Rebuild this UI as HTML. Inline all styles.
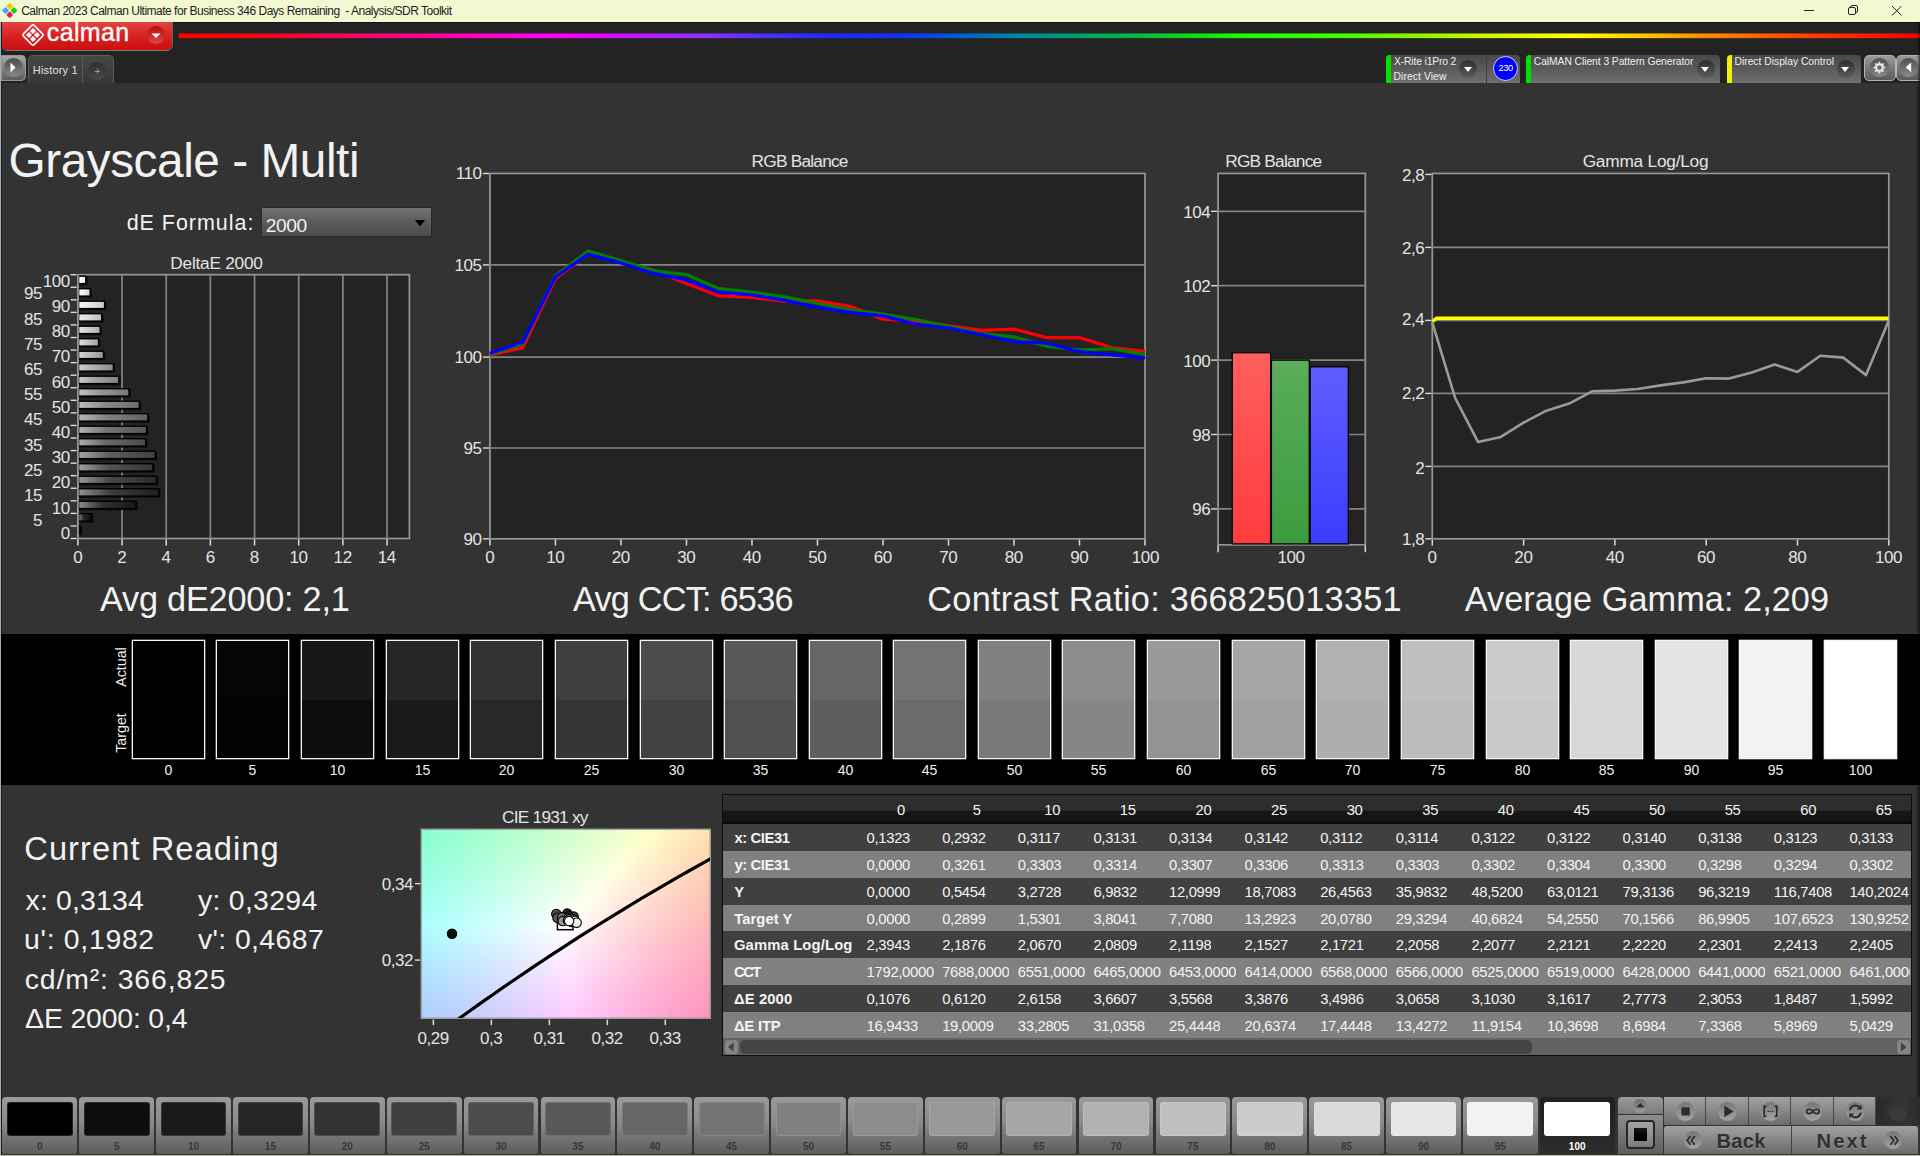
<!DOCTYPE html>
<html lang="en"><head><meta charset="utf-8"><title>Calman 2023 - Analysis/SDR Toolkit</title>
<style>
html,body{margin:0;padding:0;overflow:hidden}
html{width:1920px;height:1156px}
body{width:1920px;height:1156px;overflow:hidden;background:#333;font-family:"Liberation Sans", sans-serif;position:relative}
.t{position:absolute;white-space:nowrap;line-height:1;}
.a{position:absolute}
svg{position:absolute;left:0;top:0;overflow:visible}
svg text{font-family:"Liberation Sans", sans-serif}
.dd{position:absolute;width:18px;height:18px;border-radius:50%;background:linear-gradient(#2e2e2e,#5c5c5c);}
.dd:after{content:"";position:absolute;left:4.500px;top:7.400px;border-left:4.500px solid transparent;border-right:4.500px solid transparent;border-top:5.200px solid #fff}
.mb{position:absolute;top:55px;height:28px;border-radius:4px 4px 0 0;background:linear-gradient(#484848,#6e6e6e);overflow:hidden}
.mb i{position:absolute;left:0;top:0;bottom:0;width:5px}
.sw{position:absolute;top:640px;width:71px;height:117px;border:1px solid #f4f4f4;box-shadow:0 0 0 .4px #bbb}
.sw b{position:absolute;left:0;right:0;top:0;height:59px}
.bb{position:absolute;top:1097px;width:74.800px;height:57px;border-radius:4px 4px 2px 2px;background:linear-gradient(#9a9a9a,#8a8a8a 45%,#5c5c5c)}
.bb b{position:absolute;left:4.600px;top:4.600px;width:65.800px;height:34px;border-radius:3px;box-shadow:0 0 0 1px rgba(255,255,255,.13) inset}
.bb span{position:absolute;left:0;right:0;top:45px;text-align:center;font-size:10px;font-weight:bold;color:#383838;line-height:1}
.cb{position:absolute;top:1097px;height:28px;width:41.400px;background:linear-gradient(#a2a2a2,#6c6c6c);box-shadow:1px 0 0 #484848}
.cb u{position:absolute;left:12px;top:4.900px;width:19px;height:19px;border-radius:50%;background:linear-gradient(#777,#a4a4a4)}
</style></head><body>

<div class="a" style="left:0;top:0;width:1920px;height:22px;background:#f3f8d3"></div>
<svg width="22" height="22" viewBox="0 0 22 22"><g transform="translate(9.7,10.5) rotate(45)">
<rect x="-5.6" y="-5.6" width="5.2" height="5.2" rx="1.2" fill="#ffc400"/><rect x="0.4" y="-5.6" width="5.2" height="5.2" rx="1.2" fill="#16d016"/>
<rect x="-5.6" y="0.4" width="5.2" height="5.2" rx="1.2" fill="#22b0ff"/><rect x="0.4" y="0.4" width="5.2" height="5.2" rx="1.2" fill="#f01860"/></g></svg>
<div class="t" style="top:4.80px;font-size:12.00px;color:#1c1c1c;letter-spacing:-0.493px;left:21.20px;">Calman 2023 Calman Ultimate for Business 346 Days Remaining&nbsp; - Analysis/SDR Toolkit</div>
<svg width="1920" height="22"><g stroke="#222" stroke-width="1" fill="none">
<path d="M1804 10.5h10"/><rect x="1848.5" y="7.5" width="7" height="7" rx="1.5"/><path d="M1850.5 7.5v-.5a1.5 1.5 0 0 1 1.5-1.5h4a1.5 1.5 0 0 1 1.5 1.5v4a1.5 1.5 0 0 1-1.5 1.5h-.5"/>
<path d="M1892 6l9.5 9.5M1901.5 6l-9.5 9.5"/></g></svg>
<div class="a" style="left:0;top:22px;width:1920px;height:61px;background:#232323"></div>
<div class="a" style="left:0;top:22px;width:1px;height:1134px;background:#a4acb4"></div><div class="a" style="left:1px;top:22px;width:1px;height:1134px;background:#1c1c1c"></div>
<div class="a" style="left:2px;top:22px;width:170px;height:28px;border-radius:0 0 5px 5px;background:linear-gradient(#e34343,#d62020 55%,#cb0e0e);box-shadow:0 1px 0 #777,1px 0 0 #666"></div>
<svg width="180" height="52"><g transform="translate(33,35) rotate(45)" fill="#fff">
<rect x="-7.6" y="-7.6" width="15.2" height="15.2" rx="2" fill="none" stroke="#fff" stroke-width="1.6"/>
<rect x="-5" y="-5" width="4.4" height="4.4" rx=".8"/><rect x=".6" y="-5" width="4.4" height="4.4" rx=".8"/>
<rect x="-5" y=".6" width="4.4" height="4.4" rx=".8"/><rect x=".6" y=".6" width="4.4" height="4.4" rx=".8"/></g>
<circle cx="156" cy="35" r="9" fill="#c01818"/><circle cx="156" cy="35" r="9" fill="url(#rg1)"/>
<defs><linearGradient id="rg1" x1="0" y1="0" x2="0" y2="1"><stop offset="0" stop-color="#b80c0c"/><stop offset="1" stop-color="#e04848"/></linearGradient></defs>
<path d="M151.5 33.5h9l-4.5 4.6z" fill="#fff"/></svg>
<div class="t" style="top:20.30px;font-size:25.00px;color:#fff;letter-spacing:0.352px;left:46.84px;-webkit-text-stroke:.35px #fff;">calman</div>
<svg width="1920" height="44"><defs><linearGradient id="rb" gradientUnits="userSpaceOnUse" x1="179" y1="0" x2="1920" y2="0"><stop offset="0.0000" stop-color="#ff0000"/><stop offset="0.0350" stop-color="#ff0008"/><stop offset="0.0867" stop-color="#ff0050"/><stop offset="0.1442" stop-color="#ff0098"/><stop offset="0.2045" stop-color="#ff00f0"/><stop offset="0.2361" stop-color="#f000ff"/><stop offset="0.2648" stop-color="#c018ff"/><stop offset="0.2993" stop-color="#9030ff"/><stop offset="0.3337" stop-color="#5030ff"/><stop offset="0.3739" stop-color="#2028ff"/><stop offset="0.4141" stop-color="#1030f8"/><stop offset="0.4486" stop-color="#0060d0"/><stop offset="0.4831" stop-color="#0088a0"/><stop offset="0.5175" stop-color="#00a070"/><stop offset="0.5520" stop-color="#08b840"/><stop offset="0.5864" stop-color="#10e010"/><stop offset="0.6152" stop-color="#20ff00"/><stop offset="0.6669" stop-color="#40ff00"/><stop offset="0.7013" stop-color="#80f400"/><stop offset="0.7473" stop-color="#c8f400"/><stop offset="0.7990" stop-color="#ffff00"/><stop offset="0.8392" stop-color="#ffc800"/><stop offset="0.8736" stop-color="#ff9000"/><stop offset="0.9196" stop-color="#ff5000"/><stop offset="0.9655" stop-color="#ff2000"/><stop offset="1.0000" stop-color="#ff0000"/></linearGradient></defs><rect x="178.8" y="33.45" width="1742" height="4.7" fill="url(#rb)"/></svg>
<div class="a" style="left:173px;top:22px;width:1747px;height:1px;background:#161616"></div>
<div class="a" style="left:1px;top:55px;width:25px;height:26px;border-radius:0 5px 5px 0;background:linear-gradient(#a8a8a8,#5a5a5a);box-shadow:0 0 0 1px #949494 inset"></div>
<div class="a" style="left:4px;top:58px;width:19px;height:19px;border-radius:50%;background:linear-gradient(#4a4a4a,#8a8a8a)"></div>
<svg width="30" height="90"><path d="M10.5 62.5l5 5-5 5z" fill="#fff"/></svg>
<div class="a" style="left:28px;top:54.5px;width:86px;height:28.5px;box-sizing:border-box;border-radius:5px 5px 0 0;background:linear-gradient(#474747,#383838);border:1px solid #5c5c5c;border-bottom:none"></div>
<div class="a" style="left:82px;top:56px;width:1px;height:27px;background:#5a5a5a"></div>
<div class="a" style="left:88px;top:62px;width:18px;height:18px;border-radius:50%;background:linear-gradient(#303030,#484848)"></div>
<div class="t" style="top:66.80px;font-size:10.00px;color:#9c9c9c;left:97.30px;transform:translateX(-50%);">+</div>
<div class="t" style="top:64.50px;font-size:11.00px;color:#e0e0e0;letter-spacing:0.164px;left:32.82px;">History 1</div>
<div class="a" style="left:1px;top:83px;width:1919px;height:1px;background:#333"></div>
<div class="mb" style="left:1386px;width:134px"><i style="background:#00e000"></i></div><div class="dd" style="left:1459.0px;top:59.5px"></div><div class="t" style="top:57.35px;font-size:10.30px;color:#f0f0f0;letter-spacing:-0.144px;left:1394.07px;">X-Rite i1Pro 2</div><div class="t" style="top:72.35px;font-size:10.30px;color:#f0f0f0;letter-spacing:0.100px;left:1393.48px;">Direct View</div>
<div class="a" style="left:1486px;top:57px;width:1px;height:26px;background:#3c3c3c"></div>
<div class="a" style="left:1493px;top:56px;width:23px;height:23px;border-radius:50%;background:#0000ff;border:1px solid #d0d0ff"></div>
<div class="t" style="top:64.35px;font-size:9.30px;color:#fff;letter-spacing:-0.400px;left:1505.70px;transform:translateX(-50%);">230</div>
<div class="mb" style="left:1526px;width:194px"><i style="background:#00e000"></i></div><div class="dd" style="left:1696.7px;top:59.5px"></div><div class="t" style="top:57.35px;font-size:10.30px;color:#f0f0f0;letter-spacing:-0.054px;left:1533.78px;">CalMAN Client 3 Pattern Generator</div>
<div class="mb" style="left:1727px;width:134px"><i style="background:#f0f000"></i></div><div class="dd" style="left:1836.7px;top:59.5px"></div><div class="t" style="top:57.35px;font-size:10.30px;color:#f0f0f0;letter-spacing:0.005px;left:1734.48px;">Direct Display Control</div>
<div class="a" style="left:1863.5px;top:54.5px;width:32px;height:26.4px;box-sizing:border-box;border-radius:5px;background:linear-gradient(#9a9a9a,#5a5a5a);border:1.3px solid #b4b4b4"></div>
<div class="a" style="left:1870.1px;top:58.3px;width:18.600px;height:18.600px;border-radius:50%;background:linear-gradient(#505050,#8a8a8a)"></div>
<div class="a" style="left:1895.6px;top:54.5px;width:32px;height:26.4px;box-sizing:border-box;border-radius:5px;background:linear-gradient(#9a9a9a,#5a5a5a);border:1.3px solid #b4b4b4"></div>
<div class="a" style="left:1899.1px;top:58.3px;width:18.600px;height:18.600px;border-radius:50%;background:linear-gradient(#505050,#8a8a8a)"></div>
<svg width="1920" height="90"><g transform="translate(1879.400,67.600)" fill="#eee"><circle r="3.200" fill="none" stroke="#eee" stroke-width="1.800"/><path d="M-1.600 -3.900L0 -6.300L1.600 -3.900z" transform="rotate(0)"/><path d="M-1.600 -3.900L0 -6.300L1.600 -3.900z" transform="rotate(45)"/><path d="M-1.600 -3.900L0 -6.300L1.600 -3.900z" transform="rotate(90)"/><path d="M-1.600 -3.900L0 -6.300L1.600 -3.900z" transform="rotate(135)"/><path d="M-1.600 -3.900L0 -6.300L1.600 -3.900z" transform="rotate(180)"/><path d="M-1.600 -3.900L0 -6.300L1.600 -3.900z" transform="rotate(225)"/><path d="M-1.600 -3.900L0 -6.300L1.600 -3.900z" transform="rotate(270)"/><path d="M-1.600 -3.900L0 -6.300L1.600 -3.900z" transform="rotate(315)"/></g><path d="M1911.200 62.400v9.800l-5.500-4.900z" fill="#fff"/></svg>
<div class="a" style="left:1917px;top:22px;width:3px;height:62px;background:linear-gradient(90deg,rgba(0,0,0,0),rgba(0,0,0,.6))"></div>
<div class="t" style="top:136.80px;font-size:47.80px;color:#f2f2f2;letter-spacing:-0.472px;left:8.51px;">Grayscale - Multi</div>
<div class="t" style="top:212.75px;font-size:21.50px;color:#f2f2f2;letter-spacing:0.969px;left:126.64px;">dE Formula:</div>
<div class="a" style="left:260.5px;top:207px;width:171px;height:30.4px;box-sizing:border-box;border:1.4px solid #282828;background:linear-gradient(#727272,#5a5a5a 55%,#4c4c4c)"></div>
<div class="t" style="top:215.80px;font-size:19.20px;color:#f2f2f2;letter-spacing:-0.462px;left:265.84px;">2000</div>
<svg width="440" height="240"><path d="M414.9 219.9h10.3l-5.150 6.600z" fill="#000"/></svg>
<svg width="1920" height="640"><defs><linearGradient id="bg0"><stop offset="0" stop-color="#7f7f7f"/><stop offset=".4" stop-color="#1b1b1b"/><stop offset="1" stop-color="#000000"/></linearGradient><linearGradient id="bg1"><stop offset="0" stop-color="#868686"/><stop offset=".4" stop-color="#272727"/><stop offset="1" stop-color="#0b0b0b"/></linearGradient><linearGradient id="bg2"><stop offset="0" stop-color="#8c8c8c"/><stop offset=".4" stop-color="#333333"/><stop offset="1" stop-color="#161616"/></linearGradient><linearGradient id="bg3"><stop offset="0" stop-color="#929292"/><stop offset=".4" stop-color="#3d3d3d"/><stop offset="1" stop-color="#202020"/></linearGradient><linearGradient id="bg4"><stop offset="0" stop-color="#999999"/><stop offset=".4" stop-color="#494949"/><stop offset="1" stop-color="#2b2b2b"/></linearGradient><linearGradient id="bg5"><stop offset="0" stop-color="#9f9f9f"/><stop offset=".4" stop-color="#545454"/><stop offset="1" stop-color="#363636"/></linearGradient><linearGradient id="bg6"><stop offset="0" stop-color="#a5a5a5"/><stop offset=".4" stop-color="#5f5f5f"/><stop offset="1" stop-color="#404040"/></linearGradient><linearGradient id="bg7"><stop offset="0" stop-color="#acacac"/><stop offset=".4" stop-color="#6b6b6b"/><stop offset="1" stop-color="#4b4b4b"/></linearGradient><linearGradient id="bg8"><stop offset="0" stop-color="#b2b2b2"/><stop offset=".4" stop-color="#767676"/><stop offset="1" stop-color="#565656"/></linearGradient><linearGradient id="bg9"><stop offset="0" stop-color="#b9b9b9"/><stop offset=".4" stop-color="#828282"/><stop offset="1" stop-color="#616161"/></linearGradient><linearGradient id="bg10"><stop offset="0" stop-color="#bfbfbf"/><stop offset=".4" stop-color="#8d8d8d"/><stop offset="1" stop-color="#6c6c6c"/></linearGradient><linearGradient id="bg11"><stop offset="0" stop-color="#c5c5c5"/><stop offset=".4" stop-color="#989898"/><stop offset="1" stop-color="#777777"/></linearGradient><linearGradient id="bg12"><stop offset="0" stop-color="#cccccc"/><stop offset=".4" stop-color="#a4a4a4"/><stop offset="1" stop-color="#828282"/></linearGradient><linearGradient id="bg13"><stop offset="0" stop-color="#d2d2d2"/><stop offset=".4" stop-color="#afafaf"/><stop offset="1" stop-color="#8d8d8d"/></linearGradient><linearGradient id="bg14"><stop offset="0" stop-color="#d8d8d8"/><stop offset=".4" stop-color="#bababa"/><stop offset="1" stop-color="#979797"/></linearGradient><linearGradient id="bg15"><stop offset="0" stop-color="#dfdfdf"/><stop offset=".4" stop-color="#c6c6c6"/><stop offset="1" stop-color="#a2a2a2"/></linearGradient><linearGradient id="bg16"><stop offset="0" stop-color="#e5e5e5"/><stop offset=".4" stop-color="#d1d1d1"/><stop offset="1" stop-color="#adadad"/></linearGradient><linearGradient id="bg17"><stop offset="0" stop-color="#ececec"/><stop offset=".4" stop-color="#dddddd"/><stop offset="1" stop-color="#b8b8b8"/></linearGradient><linearGradient id="bg18"><stop offset="0" stop-color="#f2f2f2"/><stop offset=".4" stop-color="#e8e8e8"/><stop offset="1" stop-color="#c3c3c3"/></linearGradient><linearGradient id="bg19"><stop offset="0" stop-color="#f8f8f8"/><stop offset=".4" stop-color="#f3f3f3"/><stop offset="1" stop-color="#cdcdcd"/></linearGradient><linearGradient id="bg20"><stop offset="0" stop-color="#ffffff"/><stop offset=".4" stop-color="#ffffff"/><stop offset="1" stop-color="#d8d8d8"/></linearGradient><linearGradient id="br" x1="0" y1="0" x2="0" y2="1"><stop offset="0" stop-color="#ff5e5e"/><stop offset="1" stop-color="#ff3c3c"/></linearGradient><linearGradient id="bgn" x1="0" y1="0" x2="0" y2="1"><stop offset="0" stop-color="#5aad5a"/><stop offset="1" stop-color="#3c9c3c"/></linearGradient><linearGradient id="bbl" x1="0" y1="0" x2="0" y2="1"><stop offset="0" stop-color="#5e5eff"/><stop offset="1" stop-color="#3c3cff"/></linearGradient></defs><g fill="none"><rect x="77.90" y="274.70" width="331.50" height="263.80" fill="#232323" stroke="#989898" stroke-width="1.7"/>
<path d="M122.06 274.70L122.06 538.50" stroke="#858585" stroke-width="1.7"/>
<path d="M166.22 274.70L166.22 538.50" stroke="#858585" stroke-width="1.7"/>
<path d="M210.38 274.70L210.38 538.50" stroke="#858585" stroke-width="1.7"/>
<path d="M254.54 274.70L254.54 538.50" stroke="#858585" stroke-width="1.7"/>
<path d="M298.70 274.70L298.70 538.50" stroke="#858585" stroke-width="1.7"/>
<path d="M342.86 274.70L342.86 538.50" stroke="#858585" stroke-width="1.7"/>
<path d="M387.02 274.70L387.02 538.50" stroke="#858585" stroke-width="1.7"/>
<path d="M77.90 539.30L77.90 545.50" stroke="#dcdcdc" stroke-width="1.5"/>
<path d="M122.06 539.30L122.06 545.50" stroke="#dcdcdc" stroke-width="1.5"/>
<path d="M166.22 539.30L166.22 545.50" stroke="#dcdcdc" stroke-width="1.5"/>
<path d="M210.38 539.30L210.38 545.50" stroke="#dcdcdc" stroke-width="1.5"/>
<path d="M254.54 539.30L254.54 545.50" stroke="#dcdcdc" stroke-width="1.5"/>
<path d="M298.70 539.30L298.70 545.50" stroke="#dcdcdc" stroke-width="1.5"/>
<path d="M342.86 539.30L342.86 545.50" stroke="#dcdcdc" stroke-width="1.5"/>
<path d="M387.02 539.30L387.02 545.50" stroke="#dcdcdc" stroke-width="1.5"/>
<path d="M70.60 274.70L76.60 274.70" stroke="#dcdcdc" stroke-width="1.4"/>
<path d="M70.60 287.26L76.60 287.26" stroke="#dcdcdc" stroke-width="1.4"/>
<path d="M70.60 299.82L76.60 299.82" stroke="#dcdcdc" stroke-width="1.4"/>
<path d="M70.60 312.39L76.60 312.39" stroke="#dcdcdc" stroke-width="1.4"/>
<path d="M70.60 324.95L76.60 324.95" stroke="#dcdcdc" stroke-width="1.4"/>
<path d="M70.60 337.51L76.60 337.51" stroke="#dcdcdc" stroke-width="1.4"/>
<path d="M70.60 350.07L76.60 350.07" stroke="#dcdcdc" stroke-width="1.4"/>
<path d="M70.60 362.63L76.60 362.63" stroke="#dcdcdc" stroke-width="1.4"/>
<path d="M70.60 375.20L76.60 375.20" stroke="#dcdcdc" stroke-width="1.4"/>
<path d="M70.60 387.76L76.60 387.76" stroke="#dcdcdc" stroke-width="1.4"/>
<path d="M70.60 400.32L76.60 400.32" stroke="#dcdcdc" stroke-width="1.4"/>
<path d="M70.60 412.88L76.60 412.88" stroke="#dcdcdc" stroke-width="1.4"/>
<path d="M70.60 425.44L76.60 425.44" stroke="#dcdcdc" stroke-width="1.4"/>
<path d="M70.60 438.00L76.60 438.00" stroke="#dcdcdc" stroke-width="1.4"/>
<path d="M70.60 450.57L76.60 450.57" stroke="#dcdcdc" stroke-width="1.4"/>
<path d="M70.60 463.13L76.60 463.13" stroke="#dcdcdc" stroke-width="1.4"/>
<path d="M70.60 475.69L76.60 475.69" stroke="#dcdcdc" stroke-width="1.4"/>
<path d="M70.60 488.25L76.60 488.25" stroke="#dcdcdc" stroke-width="1.4"/>
<path d="M70.60 500.81L76.60 500.81" stroke="#dcdcdc" stroke-width="1.4"/>
<path d="M70.60 513.38L76.60 513.38" stroke="#dcdcdc" stroke-width="1.4"/>
<path d="M70.60 525.94L76.60 525.94" stroke="#dcdcdc" stroke-width="1.4"/>
<path d="M70.60 538.50L76.60 538.50" stroke="#dcdcdc" stroke-width="1.4"/>
<rect x="79.5" y="526.9" width="2.8" height="8.4" fill="#000" opacity=".6"/>
<rect x="78.6" y="526.2" width="1.9" height="7.4" fill="url(#bg0)" stroke="#000" stroke-width="1.4"/>
<text x="69.88" y="538.80" font-size="17.00" text-anchor="end" fill="#e4e4e4" letter-spacing="-0.42">0</text>
<rect x="79.5" y="514.4" width="13.9" height="8.4" fill="#000" opacity=".6"/>
<rect x="78.6" y="513.7" width="13.0" height="7.4" fill="url(#bg1)" stroke="#000" stroke-width="1.4"/>
<text x="42.08" y="526.20" font-size="17.00" text-anchor="end" fill="#e4e4e4" letter-spacing="-0.42">5</text>
<rect x="79.5" y="501.9" width="58.2" height="8.4" fill="#000" opacity=".6"/>
<rect x="78.6" y="501.2" width="57.3" height="7.4" fill="url(#bg2)" stroke="#000" stroke-width="1.4"/>
<text x="69.88" y="513.60" font-size="17.00" text-anchor="end" fill="#e4e4e4" letter-spacing="-0.42">10</text>
<rect x="79.5" y="489.4" width="81.2" height="8.4" fill="#000" opacity=".6"/>
<rect x="78.6" y="488.7" width="80.3" height="7.4" fill="url(#bg3)" stroke="#000" stroke-width="1.4"/>
<text x="42.08" y="501.00" font-size="17.00" text-anchor="end" fill="#e4e4e4" letter-spacing="-0.42">15</text>
<rect x="79.5" y="476.9" width="78.9" height="8.4" fill="#000" opacity=".6"/>
<rect x="78.6" y="476.2" width="78.0" height="7.4" fill="url(#bg4)" stroke="#000" stroke-width="1.4"/>
<text x="69.88" y="488.40" font-size="17.00" text-anchor="end" fill="#e4e4e4" letter-spacing="-0.42">20</text>
<rect x="79.5" y="464.4" width="75.2" height="8.4" fill="#000" opacity=".6"/>
<rect x="78.6" y="463.7" width="74.3" height="7.4" fill="url(#bg5)" stroke="#000" stroke-width="1.4"/>
<text x="42.08" y="475.80" font-size="17.00" text-anchor="end" fill="#e4e4e4" letter-spacing="-0.42">25</text>
<rect x="79.5" y="451.9" width="77.6" height="8.4" fill="#000" opacity=".6"/>
<rect x="78.6" y="451.2" width="76.7" height="7.4" fill="url(#bg6)" stroke="#000" stroke-width="1.4"/>
<text x="69.88" y="463.20" font-size="17.00" text-anchor="end" fill="#e4e4e4" letter-spacing="-0.42">30</text>
<rect x="79.5" y="439.4" width="68.1" height="8.4" fill="#000" opacity=".6"/>
<rect x="78.6" y="438.7" width="67.2" height="7.4" fill="url(#bg7)" stroke="#000" stroke-width="1.4"/>
<text x="42.08" y="450.60" font-size="17.00" text-anchor="end" fill="#e4e4e4" letter-spacing="-0.42">35</text>
<rect x="79.5" y="426.9" width="68.9" height="8.4" fill="#000" opacity=".6"/>
<rect x="78.6" y="426.2" width="68.0" height="7.4" fill="url(#bg8)" stroke="#000" stroke-width="1.4"/>
<text x="69.88" y="438.00" font-size="17.00" text-anchor="end" fill="#e4e4e4" letter-spacing="-0.42">40</text>
<rect x="79.5" y="414.4" width="70.2" height="8.4" fill="#000" opacity=".6"/>
<rect x="78.6" y="413.7" width="69.3" height="7.4" fill="url(#bg9)" stroke="#000" stroke-width="1.4"/>
<text x="42.08" y="425.40" font-size="17.00" text-anchor="end" fill="#e4e4e4" letter-spacing="-0.42">45</text>
<rect x="79.5" y="401.9" width="61.7" height="8.4" fill="#000" opacity=".6"/>
<rect x="78.6" y="401.2" width="60.8" height="7.4" fill="url(#bg10)" stroke="#000" stroke-width="1.4"/>
<text x="69.88" y="412.80" font-size="17.00" text-anchor="end" fill="#e4e4e4" letter-spacing="-0.42">50</text>
<rect x="79.5" y="389.4" width="51.3" height="8.4" fill="#000" opacity=".6"/>
<rect x="78.6" y="388.7" width="50.4" height="7.4" fill="url(#bg11)" stroke="#000" stroke-width="1.4"/>
<text x="42.08" y="400.20" font-size="17.00" text-anchor="end" fill="#e4e4e4" letter-spacing="-0.42">55</text>
<rect x="79.5" y="376.9" width="41.2" height="8.4" fill="#000" opacity=".6"/>
<rect x="78.6" y="376.2" width="40.3" height="7.4" fill="url(#bg12)" stroke="#000" stroke-width="1.4"/>
<text x="69.88" y="387.60" font-size="17.00" text-anchor="end" fill="#e4e4e4" letter-spacing="-0.42">60</text>
<rect x="79.5" y="364.4" width="35.7" height="8.4" fill="#000" opacity=".6"/>
<rect x="78.6" y="363.7" width="34.8" height="7.4" fill="url(#bg13)" stroke="#000" stroke-width="1.4"/>
<text x="42.08" y="375.00" font-size="17.00" text-anchor="end" fill="#e4e4e4" letter-spacing="-0.42">65</text>
<rect x="79.5" y="351.9" width="25.8" height="8.4" fill="#000" opacity=".6"/>
<rect x="78.6" y="351.2" width="24.9" height="7.4" fill="url(#bg14)" stroke="#000" stroke-width="1.4"/>
<text x="69.88" y="362.40" font-size="17.00" text-anchor="end" fill="#e4e4e4" letter-spacing="-0.42">70</text>
<rect x="79.5" y="339.4" width="20.9" height="8.4" fill="#000" opacity=".6"/>
<rect x="78.6" y="338.7" width="20.0" height="7.4" fill="url(#bg15)" stroke="#000" stroke-width="1.4"/>
<text x="42.08" y="349.80" font-size="17.00" text-anchor="end" fill="#e4e4e4" letter-spacing="-0.42">75</text>
<rect x="79.5" y="326.9" width="22.5" height="8.4" fill="#000" opacity=".6"/>
<rect x="78.6" y="326.2" width="21.6" height="7.4" fill="url(#bg16)" stroke="#000" stroke-width="1.4"/>
<text x="69.88" y="337.20" font-size="17.00" text-anchor="end" fill="#e4e4e4" letter-spacing="-0.42">80</text>
<rect x="79.5" y="314.4" width="24.0" height="8.4" fill="#000" opacity=".6"/>
<rect x="78.6" y="313.7" width="23.1" height="7.4" fill="url(#bg17)" stroke="#000" stroke-width="1.4"/>
<text x="42.08" y="324.60" font-size="17.00" text-anchor="end" fill="#e4e4e4" letter-spacing="-0.42">85</text>
<rect x="79.5" y="301.9" width="26.9" height="8.4" fill="#000" opacity=".6"/>
<rect x="78.6" y="301.2" width="26.0" height="7.4" fill="url(#bg18)" stroke="#000" stroke-width="1.4"/>
<text x="69.88" y="312.00" font-size="17.00" text-anchor="end" fill="#e4e4e4" letter-spacing="-0.42">90</text>
<rect x="79.5" y="289.4" width="12.5" height="8.4" fill="#000" opacity=".6"/>
<rect x="78.6" y="288.7" width="11.6" height="7.4" fill="url(#bg19)" stroke="#000" stroke-width="1.4"/>
<text x="42.08" y="299.40" font-size="17.00" text-anchor="end" fill="#e4e4e4" letter-spacing="-0.42">95</text>
<rect x="79.5" y="276.9" width="8.1" height="8.4" fill="#000" opacity=".6"/>
<rect x="78.6" y="276.2" width="7.2" height="7.4" fill="url(#bg20)" stroke="#000" stroke-width="1.4"/>
<text x="69.88" y="286.80" font-size="17.00" text-anchor="end" fill="#e4e4e4" letter-spacing="-0.42">100</text>
<path d="M77.90 274.70L77.90 538.50" stroke="#989898" stroke-width="1.7"/>
<text x="77.69" y="563.30" font-size="17.00" text-anchor="middle" fill="#e4e4e4" letter-spacing="-0.42">0</text>
<text x="121.85" y="563.30" font-size="17.00" text-anchor="middle" fill="#e4e4e4" letter-spacing="-0.42">2</text>
<text x="166.01" y="563.30" font-size="17.00" text-anchor="middle" fill="#e4e4e4" letter-spacing="-0.42">4</text>
<text x="210.17" y="563.30" font-size="17.00" text-anchor="middle" fill="#e4e4e4" letter-spacing="-0.42">6</text>
<text x="254.33" y="563.30" font-size="17.00" text-anchor="middle" fill="#e4e4e4" letter-spacing="-0.42">8</text>
<text x="298.49" y="563.30" font-size="17.00" text-anchor="middle" fill="#e4e4e4" letter-spacing="-0.42">10</text>
<text x="342.65" y="563.30" font-size="17.00" text-anchor="middle" fill="#e4e4e4" letter-spacing="-0.42">12</text>
<text x="386.81" y="563.30" font-size="17.00" text-anchor="middle" fill="#e4e4e4" letter-spacing="-0.42">14</text>
<text x="170.32" y="268.70" font-size="17.30" fill="#e4e4e4" letter-spacing="-0.247">DeltaE 2000</text>
<rect x="489.95" y="173.45" width="655.05" height="365.35" fill="#232323" stroke="#989898" stroke-width="1.7"/>
<path d="M489.95 448.00L1145.00 448.00" stroke="#858585" stroke-width="1.7"/>
<path d="M489.95 357.10L1145.00 357.10" stroke="#858585" stroke-width="1.7"/>
<path d="M489.95 264.90L1145.00 264.90" stroke="#858585" stroke-width="1.7"/>
<path d="M489.95 539.60L489.95 545.60" stroke="#dcdcdc" stroke-width="1.5"/>
<path d="M555.45 539.60L555.45 545.60" stroke="#dcdcdc" stroke-width="1.5"/>
<path d="M620.96 539.60L620.96 545.60" stroke="#dcdcdc" stroke-width="1.5"/>
<path d="M686.46 539.60L686.46 545.60" stroke="#dcdcdc" stroke-width="1.5"/>
<path d="M751.97 539.60L751.97 545.60" stroke="#dcdcdc" stroke-width="1.5"/>
<path d="M817.47 539.60L817.47 545.60" stroke="#dcdcdc" stroke-width="1.5"/>
<path d="M882.98 539.60L882.98 545.60" stroke="#dcdcdc" stroke-width="1.5"/>
<path d="M948.48 539.60L948.48 545.60" stroke="#dcdcdc" stroke-width="1.5"/>
<path d="M1013.99 539.60L1013.99 545.60" stroke="#dcdcdc" stroke-width="1.5"/>
<path d="M1079.49 539.60L1079.49 545.60" stroke="#dcdcdc" stroke-width="1.5"/>
<path d="M1145.00 539.60L1145.00 545.60" stroke="#dcdcdc" stroke-width="1.5"/>
<path d="M482.95 173.45L489.05 173.45" stroke="#dcdcdc" stroke-width="1.4"/>
<text x="481.53" y="179.35" font-size="17.00" text-anchor="end" fill="#e4e4e4" letter-spacing="-0.42">110</text>
<path d="M482.95 264.90L489.05 264.90" stroke="#dcdcdc" stroke-width="1.4"/>
<text x="481.53" y="270.80" font-size="17.00" text-anchor="end" fill="#e4e4e4" letter-spacing="-0.42">105</text>
<path d="M482.95 357.10L489.05 357.10" stroke="#dcdcdc" stroke-width="1.4"/>
<text x="481.53" y="363.00" font-size="17.00" text-anchor="end" fill="#e4e4e4" letter-spacing="-0.42">100</text>
<path d="M482.95 448.00L489.05 448.00" stroke="#dcdcdc" stroke-width="1.4"/>
<text x="481.53" y="453.90" font-size="17.00" text-anchor="end" fill="#e4e4e4" letter-spacing="-0.42">95</text>
<path d="M482.95 538.80L489.05 538.80" stroke="#dcdcdc" stroke-width="1.4"/>
<text x="481.53" y="544.70" font-size="17.00" text-anchor="end" fill="#e4e4e4" letter-spacing="-0.42">90</text>
<text x="489.74" y="563.30" font-size="17.00" text-anchor="middle" fill="#e4e4e4" letter-spacing="-0.42">0</text>
<text x="555.24" y="563.30" font-size="17.00" text-anchor="middle" fill="#e4e4e4" letter-spacing="-0.42">10</text>
<text x="620.75" y="563.30" font-size="17.00" text-anchor="middle" fill="#e4e4e4" letter-spacing="-0.42">20</text>
<text x="686.25" y="563.30" font-size="17.00" text-anchor="middle" fill="#e4e4e4" letter-spacing="-0.42">30</text>
<text x="751.76" y="563.30" font-size="17.00" text-anchor="middle" fill="#e4e4e4" letter-spacing="-0.42">40</text>
<text x="817.26" y="563.30" font-size="17.00" text-anchor="middle" fill="#e4e4e4" letter-spacing="-0.42">50</text>
<text x="882.77" y="563.30" font-size="17.00" text-anchor="middle" fill="#e4e4e4" letter-spacing="-0.42">60</text>
<text x="948.27" y="563.30" font-size="17.00" text-anchor="middle" fill="#e4e4e4" letter-spacing="-0.42">70</text>
<text x="1013.78" y="563.30" font-size="17.00" text-anchor="middle" fill="#e4e4e4" letter-spacing="-0.42">80</text>
<text x="1079.28" y="563.30" font-size="17.00" text-anchor="middle" fill="#e4e4e4" letter-spacing="-0.42">90</text>
<text x="1145.39" y="563.30" font-size="17.00" text-anchor="middle" fill="#e4e4e4" letter-spacing="-0.42">100</text>
<text x="751.52" y="166.50" font-size="17.30" fill="#e4e4e4" letter-spacing="-0.776">RGB Balance</text>
<polyline points="489.9,355.2 522.7,347.8 555.5,278.6 588.2,253.7 621.0,262.0 653.7,270.3 686.5,283.6 719.2,295.9 752.0,297.4 784.7,301.3 817.5,300.9 850.2,306.3 883.0,319.2 915.7,321.2 948.5,325.6 981.2,330.4 1014.0,329.1 1046.7,337.6 1079.5,337.6 1112.2,347.8 1145.0,351.3" fill="none" stroke="#ff0000" stroke-width="3.2" stroke-linejoin="round"/>
<polyline points="489.9,354.2 522.7,344.1 555.5,275.8 588.2,251.1 621.0,260.5 653.7,270.8 686.5,274.7 719.2,288.7 752.0,292.1 784.7,296.9 817.5,303.5 850.2,309.8 883.0,314.2 915.7,319.5 948.5,326.2 981.2,333.6 1014.0,336.9 1046.7,346.3 1079.5,350.0 1112.2,348.7 1145.0,354.6" fill="none" stroke="#008000" stroke-width="3.2" stroke-linejoin="round"/>
<polyline points="489.9,353.3 522.7,342.2 555.5,276.7 588.2,254.2 621.0,262.9 653.7,273.4 686.5,279.9 719.2,292.4 752.0,295.0 784.7,300.4 817.5,307.4 850.2,312.4 883.0,315.9 915.7,324.0 948.5,328.0 981.2,334.5 1014.0,341.7 1046.7,343.0 1079.5,351.6 1112.2,354.8 1145.0,357.9" fill="none" stroke="#0000ff" stroke-width="3.2" stroke-linejoin="round"/>
<rect x="1218.10" y="173.45" width="147.20" height="371.35" fill="#232323" stroke="#989898" stroke-width="1.7"/>
<path d="M1218.10 508.90L1365.30 508.90" stroke="#858585" stroke-width="1.7"/>
<path d="M1211.10 508.90L1217.20 508.90" stroke="#dcdcdc" stroke-width="1.4"/>
<path d="M1218.10 434.50L1365.30 434.50" stroke="#858585" stroke-width="1.7"/>
<path d="M1211.10 434.50L1217.20 434.50" stroke="#dcdcdc" stroke-width="1.4"/>
<path d="M1218.10 360.10L1365.30 360.10" stroke="#858585" stroke-width="1.7"/>
<path d="M1211.10 360.10L1217.20 360.10" stroke="#dcdcdc" stroke-width="1.4"/>
<path d="M1218.10 285.70L1365.30 285.70" stroke="#858585" stroke-width="1.7"/>
<path d="M1211.10 285.70L1217.20 285.70" stroke="#dcdcdc" stroke-width="1.4"/>
<path d="M1218.10 211.30L1365.30 211.30" stroke="#858585" stroke-width="1.7"/>
<path d="M1211.10 211.30L1217.20 211.30" stroke="#dcdcdc" stroke-width="1.4"/>
<path d="M1218.10 545.60L1218.10 552.20" stroke="#dcdcdc" stroke-width="1.5"/>
<path d="M1365.30 545.60L1365.30 552.20" stroke="#dcdcdc" stroke-width="1.5"/>
<rect x="1232.3" y="352.7" width="38.3" height="191.2" fill="url(#br)" stroke="#000" stroke-width="1.3"/>
<rect x="1271.4" y="360.1" width="37.9" height="183.8" fill="url(#bgn)" stroke="#000" stroke-width="1.3"/>
<rect x="1310.1" y="366.8" width="38.2" height="177.1" fill="url(#bbl)" stroke="#000" stroke-width="1.3"/>
<text x="1210.38" y="515.40" font-size="17.00" text-anchor="end" fill="#e4e4e4" letter-spacing="-0.42">96</text>
<text x="1210.38" y="441.00" font-size="17.00" text-anchor="end" fill="#e4e4e4" letter-spacing="-0.42">98</text>
<text x="1210.38" y="366.60" font-size="17.00" text-anchor="end" fill="#e4e4e4" letter-spacing="-0.42">100</text>
<text x="1210.38" y="292.20" font-size="17.00" text-anchor="end" fill="#e4e4e4" letter-spacing="-0.42">102</text>
<text x="1210.38" y="217.80" font-size="17.00" text-anchor="end" fill="#e4e4e4" letter-spacing="-0.42">104</text>
<text x="1291.09" y="563.30" font-size="17.00" text-anchor="middle" fill="#e4e4e4" letter-spacing="-0.42">100</text>
<text x="1225.22" y="166.50" font-size="17.30" fill="#e4e4e4" letter-spacing="-0.776">RGB Balance</text>
<rect x="1432.30" y="173.45" width="456.50" height="365.35" fill="#232323" stroke="#989898" stroke-width="1.7"/>
<path d="M1432.30 466.40L1888.80 466.40" stroke="#858585" stroke-width="1.7"/>
<path d="M1432.30 393.40L1888.80 393.40" stroke="#858585" stroke-width="1.7"/>
<path d="M1432.30 320.40L1888.80 320.40" stroke="#858585" stroke-width="1.7"/>
<path d="M1432.30 247.40L1888.80 247.40" stroke="#858585" stroke-width="1.7"/>
<path d="M1425.30 538.80L1431.40 538.80" stroke="#dcdcdc" stroke-width="1.4"/>
<path d="M1425.30 466.40L1431.40 466.40" stroke="#dcdcdc" stroke-width="1.4"/>
<path d="M1425.30 393.40L1431.40 393.40" stroke="#dcdcdc" stroke-width="1.4"/>
<path d="M1425.30 320.40L1431.40 320.40" stroke="#dcdcdc" stroke-width="1.4"/>
<path d="M1425.30 247.40L1431.40 247.40" stroke="#dcdcdc" stroke-width="1.4"/>
<path d="M1425.30 174.40L1431.40 174.40" stroke="#dcdcdc" stroke-width="1.4"/>
<path d="M1432.30 539.60L1432.30 545.60" stroke="#dcdcdc" stroke-width="1.5"/>
<path d="M1523.60 539.60L1523.60 545.60" stroke="#dcdcdc" stroke-width="1.5"/>
<path d="M1614.90 539.60L1614.90 545.60" stroke="#dcdcdc" stroke-width="1.5"/>
<path d="M1706.20 539.60L1706.20 545.60" stroke="#dcdcdc" stroke-width="1.5"/>
<path d="M1797.50 539.60L1797.50 545.60" stroke="#dcdcdc" stroke-width="1.5"/>
<path d="M1888.80 539.60L1888.80 545.60" stroke="#dcdcdc" stroke-width="1.5"/>
<text x="1424.28" y="180.60" font-size="17.00" text-anchor="end" fill="#e4e4e4" letter-spacing="-0.42">2,8</text>
<text x="1424.28" y="254.00" font-size="17.00" text-anchor="end" fill="#e4e4e4" letter-spacing="-0.42">2,6</text>
<text x="1424.28" y="325.40" font-size="17.00" text-anchor="end" fill="#e4e4e4" letter-spacing="-0.42">2,4</text>
<text x="1424.28" y="399.10" font-size="17.00" text-anchor="end" fill="#e4e4e4" letter-spacing="-0.42">2,2</text>
<text x="1424.28" y="473.50" font-size="17.00" text-anchor="end" fill="#e4e4e4" letter-spacing="-0.42">2</text>
<text x="1424.28" y="545.00" font-size="17.00" text-anchor="end" fill="#e4e4e4" letter-spacing="-0.42">1,8</text>
<text x="1432.09" y="563.30" font-size="17.00" text-anchor="middle" fill="#e4e4e4" letter-spacing="-0.42">0</text>
<text x="1523.39" y="563.30" font-size="17.00" text-anchor="middle" fill="#e4e4e4" letter-spacing="-0.42">20</text>
<text x="1614.69" y="563.30" font-size="17.00" text-anchor="middle" fill="#e4e4e4" letter-spacing="-0.42">40</text>
<text x="1705.99" y="563.30" font-size="17.00" text-anchor="middle" fill="#e4e4e4" letter-spacing="-0.42">60</text>
<text x="1797.29" y="563.30" font-size="17.00" text-anchor="middle" fill="#e4e4e4" letter-spacing="-0.42">80</text>
<text x="1888.59" y="563.30" font-size="17.00" text-anchor="middle" fill="#e4e4e4" letter-spacing="-0.42">100</text>
<text x="1582.63" y="166.50" font-size="17.30" fill="#e4e4e4" letter-spacing="-0.231">Gamma Log/Log</text>
<polyline points="1432.3,322.5 1455.1,397.9 1478.0,441.9 1500.8,436.9 1523.6,422.7 1546.4,410.7 1569.2,403.6 1592.1,391.3 1614.9,390.6 1637.7,389.0 1660.5,385.4 1683.4,382.4 1706.2,378.3 1729.0,378.6 1751.8,372.6 1774.7,364.6 1797.5,371.9 1820.3,355.8 1843.2,357.6 1866.0,375.1 1888.8,320.4" fill="none" stroke="#9a9a9a" stroke-width="2.6" stroke-linejoin="round"/>
<path d="M1432.6 321.5L1436.3 318.3L1888.5 318.3" fill="none" stroke="#ffff00" stroke-width="3.4" stroke-linejoin="round"/></g></svg>
<div class="t" style="top:582.15px;font-size:34.30px;color:#f2f2f2;letter-spacing:-0.224px;left:100.00px;">Avg dE2000: 2,1</div>
<div class="t" style="top:582.15px;font-size:34.30px;color:#f2f2f2;letter-spacing:-0.796px;left:573.00px;">Avg CCT: 6536</div>
<div class="t" style="top:582.15px;font-size:34.30px;color:#f2f2f2;letter-spacing:0.267px;left:927.28px;">Contrast Ratio: 366825013351</div>
<div class="t" style="top:582.15px;font-size:34.30px;color:#f2f2f2;letter-spacing:0.046px;left:1464.70px;">Average Gamma: 2,209</div>
<div class="a" style="left:1px;top:634px;width:1919px;height:151px;background:#000"></div>
<div class="sw" style="left:132px;background:#000000"><b style="background:#000000"></b></div>
<div class="t" style="top:763.00px;font-size:14.00px;color:#f0f0f0;left:168.50px;transform:translateX(-50%);">0</div>
<div class="sw" style="left:216px;background:#030303"><b style="background:#040505"></b></div>
<div class="t" style="top:763.00px;font-size:14.00px;color:#f0f0f0;left:252.50px;transform:translateX(-50%);">5</div>
<div class="sw" style="left:301px;background:#0d0d0d"><b style="background:#171818"></b></div>
<div class="t" style="top:763.00px;font-size:14.00px;color:#f0f0f0;left:337.50px;transform:translateX(-50%);">10</div>
<div class="sw" style="left:386px;background:#1a1a1a"><b style="background:#252625"></b></div>
<div class="t" style="top:763.00px;font-size:14.00px;color:#f0f0f0;left:422.50px;transform:translateX(-50%);">15</div>
<div class="sw" style="left:470px;background:#282828"><b style="background:#333333"></b></div>
<div class="t" style="top:763.00px;font-size:14.00px;color:#f0f0f0;left:506.50px;transform:translateX(-50%);">20</div>
<div class="sw" style="left:555px;background:#353535"><b style="background:#40403f"></b></div>
<div class="t" style="top:763.00px;font-size:14.00px;color:#f0f0f0;left:591.50px;transform:translateX(-50%);">25</div>
<div class="sw" style="left:640px;background:#424242"><b style="background:#4b4c4c"></b></div>
<div class="t" style="top:763.00px;font-size:14.00px;color:#f0f0f0;left:676.50px;transform:translateX(-50%);">30</div>
<div class="sw" style="left:724px;background:#505050"><b style="background:#575958"></b></div>
<div class="t" style="top:763.00px;font-size:14.00px;color:#f0f0f0;left:760.50px;transform:translateX(-50%);">35</div>
<div class="sw" style="left:809px;background:#5e5e5e"><b style="background:#656665"></b></div>
<div class="t" style="top:763.00px;font-size:14.00px;color:#f0f0f0;left:845.50px;transform:translateX(-50%);">40</div>
<div class="sw" style="left:893px;background:#6b6b6b"><b style="background:#727373"></b></div>
<div class="t" style="top:763.00px;font-size:14.00px;color:#f0f0f0;left:929.50px;transform:translateX(-50%);">45</div>
<div class="sw" style="left:978px;background:#797979"><b style="background:#81807f"></b></div>
<div class="t" style="top:763.00px;font-size:14.00px;color:#f0f0f0;left:1014.50px;transform:translateX(-50%);">50</div>
<div class="sw" style="left:1062px;background:#868686"><b style="background:#8d8c8c"></b></div>
<div class="t" style="top:763.00px;font-size:14.00px;color:#f0f0f0;left:1098.50px;transform:translateX(-50%);">55</div>
<div class="sw" style="left:1147px;background:#939393"><b style="background:#989999"></b></div>
<div class="t" style="top:763.00px;font-size:14.00px;color:#f0f0f0;left:1183.50px;transform:translateX(-50%);">60</div>
<div class="sw" style="left:1232px;background:#a1a1a1"><b style="background:#a6a6a5"></b></div>
<div class="t" style="top:763.00px;font-size:14.00px;color:#f0f0f0;left:1268.50px;transform:translateX(-50%);">65</div>
<div class="sw" style="left:1316px;background:#aeaeae"><b style="background:#b3b2b2"></b></div>
<div class="t" style="top:763.00px;font-size:14.00px;color:#f0f0f0;left:1352.50px;transform:translateX(-50%);">70</div>
<div class="sw" style="left:1401px;background:#bcbcbc"><b style="background:#bfbfbe"></b></div>
<div class="t" style="top:763.00px;font-size:14.00px;color:#f0f0f0;left:1437.50px;transform:translateX(-50%);">75</div>
<div class="sw" style="left:1486px;background:#c9c9c9"><b style="background:#cdcccc"></b></div>
<div class="t" style="top:763.00px;font-size:14.00px;color:#f0f0f0;left:1522.50px;transform:translateX(-50%);">80</div>
<div class="sw" style="left:1570px;background:#d7d7d7"><b style="background:#d9d8d7"></b></div>
<div class="t" style="top:763.00px;font-size:14.00px;color:#f0f0f0;left:1606.50px;transform:translateX(-50%);">85</div>
<div class="sw" style="left:1655px;background:#e4e4e4"><b style="background:#e7e5e4"></b></div>
<div class="t" style="top:763.00px;font-size:14.00px;color:#f0f0f0;left:1691.50px;transform:translateX(-50%);">90</div>
<div class="sw" style="left:1739px;background:#f2f2f2"><b style="background:#f5f2f2"></b></div>
<div class="t" style="top:763.00px;font-size:14.00px;color:#f0f0f0;left:1775.50px;transform:translateX(-50%);">95</div>
<div class="sw" style="left:1824px;background:#ffffff"><b style="background:#fffffe"></b></div>
<div class="t" style="top:763.00px;font-size:14.00px;color:#f0f0f0;left:1860.50px;transform:translateX(-50%);">100</div>
<div class="t" style="left:120.8px;top:666.5px;font-size:14.2px;color:#f0f0f0;transform:translate(-50%,-50%) rotate(-90deg)">Actual</div>
<div class="t" style="left:120.8px;top:732.5px;font-size:14.2px;color:#f0f0f0;transform:translate(-50%,-50%) rotate(-90deg)">Target</div>
<div class="t" style="top:833.35px;font-size:32.70px;color:#f2f2f2;letter-spacing:1.041px;left:24.26px;">Current Reading</div>
<div class="t" style="top:886.30px;font-size:28.40px;color:#f2f2f2;letter-spacing:0.161px;left:25.62px;">x: 0,3134</div>
<div class="t" style="top:886.30px;font-size:28.40px;color:#f2f2f2;letter-spacing:0.309px;left:197.93px;">y: 0,3294</div>
<div class="t" style="top:925.20px;font-size:28.40px;color:#f2f2f2;letter-spacing:0.692px;left:24.12px;">u': 0,1982</div>
<div class="t" style="top:925.20px;font-size:28.40px;color:#f2f2f2;letter-spacing:0.391px;left:197.93px;">v': 0,4687</div>
<div class="t" style="top:964.50px;font-size:28.40px;color:#f2f2f2;letter-spacing:0.891px;left:24.69px;">cd/m²: 366,825</div>
<div class="t" style="top:1003.70px;font-size:28.40px;color:#f2f2f2;letter-spacing:-0.164px;left:25.12px;">ΔE 2000: 0,4</div>
<div class="a" style="left:421px;top:829px;width:290px;height:190px;overflow:hidden"><div style="height:5px;background:linear-gradient(90deg,#86ffce,#8bffce,#90ffce,#95ffce,#9affcd,#9effcd,#a3ffcd,#a8ffcd,#adffcc,#b3ffcc,#b8ffcc,#bdffcc,#c2ffcc,#c7ffcb,#cdffcb,#d2ffcb,#d7ffcb,#ddffca,#e2ffca,#e8ffca,#eeffca,#f3ffc9,#f9ffc9,#ffffc9,#fffac4,#fff4c0,#ffefbb,#ffeab7,#ffe5b3,#ffe0af)"></div><div style="height:5px;background:linear-gradient(90deg,#88ffd0,#8dffd0,#92ffd0,#97ffd0,#9bffd0,#a0ffcf,#a5ffcf,#aaffcf,#afffcf,#b5ffcf,#baffce,#bfffce,#c4ffce,#c9ffce,#cfffce,#d4ffcd,#daffcd,#dfffcd,#e5ffcd,#eaffcc,#f0ffcc,#f6ffcc,#fcffcc,#fffdca,#fff7c5,#fff1c0,#ffecbc,#ffe7b8,#ffe2b3,#ffddaf)"></div><div style="height:5px;background:linear-gradient(90deg,#8affd3,#8fffd3,#93ffd2,#98ffd2,#9dffd2,#a2ffd2,#a7ffd2,#acffd1,#b1ffd1,#b7ffd1,#bcffd1,#c1ffd1,#c6ffd0,#ccffd0,#d1ffd0,#d7ffd0,#dcffd0,#e2ffcf,#e7ffcf,#edffcf,#f3ffcf,#f8ffcf,#feffce,#fffaca,#fff4c5,#ffefc1,#ffeabc,#ffe5b8,#ffe0b4,#ffdbb0)"></div><div style="height:5px;background:linear-gradient(90deg,#8cffd5,#90ffd5,#95ffd5,#9affd5,#9fffd4,#a4ffd4,#a9ffd4,#aeffd4,#b3ffd4,#b9ffd4,#beffd3,#c3ffd3,#c9ffd3,#ceffd3,#d3ffd3,#d9ffd2,#deffd2,#e4ffd2,#eaffd2,#efffd2,#f5ffd1,#fbffd1,#fffdcf,#fff7ca,#fff2c6,#ffecc1,#ffe7bd,#ffe2b8,#ffdeb4,#ffd9b0)"></div><div style="height:5px;background:linear-gradient(90deg,#8dffd8,#92ffd7,#97ffd7,#9cffd7,#a1ffd7,#a6ffd7,#abffd7,#b0ffd6,#b6ffd6,#bbffd6,#c0ffd6,#c5ffd6,#cbffd5,#d0ffd5,#d6ffd5,#dbffd5,#e1ffd5,#e7ffd5,#ecffd4,#f2ffd4,#f8ffd4,#feffd4,#fffad0,#fff5cb,#ffefc6,#ffeac2,#ffe5bd,#ffe0b9,#ffdbb5,#ffd7b1)"></div><div style="height:5px;background:linear-gradient(90deg,#8fffda,#94ffda,#99ffda,#9effda,#a3ffd9,#a8ffd9,#adffd9,#b2ffd9,#b8ffd9,#bdffd9,#c2ffd8,#c8ffd8,#cdffd8,#d3ffd8,#d8ffd8,#deffd7,#e3ffd7,#e9ffd7,#efffd7,#f5ffd7,#fbffd7,#fffed5,#fff8d0,#fff2cb,#ffedc7,#ffe8c2,#ffe3be,#ffdeb9,#ffd9b5,#ffd4b1)"></div><div style="height:5px;background:linear-gradient(90deg,#91ffdc,#96ffdc,#9bffdc,#a0ffdc,#a5ffdc,#aaffdc,#afffdc,#b4ffdb,#baffdb,#bfffdb,#c4ffdb,#caffdb,#cfffdb,#d5ffda,#dbffda,#e0ffda,#e6ffda,#ecffda,#f1ffda,#f7ffd9,#fdffd9,#fffbd6,#fff5d0,#fff0cc,#ffeac7,#ffe5c2,#ffe0be,#ffdbba,#ffd7b6,#ffd2b2)"></div><div style="height:5px;background:linear-gradient(90deg,#93ffdf,#98ffdf,#9dffdf,#a2ffdf,#a7ffde,#acffde,#b1ffde,#b7ffde,#bcffde,#c1ffde,#c7ffdd,#ccffdd,#d2ffdd,#d7ffdd,#ddffdd,#e3ffdd,#e8ffdd,#eeffdc,#f4ffdc,#faffdc,#fffedb,#fff8d6,#fff3d1,#ffedcc,#ffe8c7,#ffe3c3,#ffdebe,#ffd9ba,#ffd4b6,#ffd0b2)"></div><div style="height:5px;background:linear-gradient(90deg,#95ffe1,#9affe1,#9fffe1,#a4ffe1,#a9ffe1,#aeffe1,#b3ffe1,#b9ffe1,#beffe0,#c4ffe0,#c9ffe0,#cfffe0,#d4ffe0,#daffe0,#dfffe0,#e5ffdf,#ebffdf,#f1ffdf,#f7ffdf,#fdffdf,#fffbdb,#fff5d6,#fff0d1,#ffebcc,#ffe5c8,#ffe0c3,#ffdbbf,#ffd7bb,#ffd2b7,#ffceb3)"></div><div style="height:5px;background:linear-gradient(90deg,#96ffe4,#9bffe4,#a1ffe4,#a6ffe4,#abffe4,#b0ffe3,#b6ffe3,#bbffe3,#c0ffe3,#c6ffe3,#cbffe3,#d1ffe3,#d6ffe3,#dcffe2,#e2ffe2,#e8ffe2,#eeffe2,#f3ffe2,#f9ffe2,#ffffe1,#fff9dc,#fff3d7,#ffedd2,#ffe8cd,#ffe3c8,#ffdec4,#ffd9bf,#ffd4bb,#ffd0b7,#ffccb3)"></div><div style="height:5px;background:linear-gradient(90deg,#98ffe7,#9dffe6,#a3ffe6,#a8ffe6,#adffe6,#b2ffe6,#b8ffe6,#bdffe6,#c3ffe6,#c8ffe6,#ceffe5,#d3ffe5,#d9ffe5,#dfffe5,#e4ffe5,#eaffe5,#f0ffe5,#f6ffe5,#fcffe5,#fffce1,#fff6dc,#fff0d7,#ffebd2,#ffe6cd,#ffe0c8,#ffdcc4,#ffd7c0,#ffd2bb,#ffceb7,#ffc9b3)"></div><div style="height:5px;background:linear-gradient(90deg,#9affe9,#9fffe9,#a5ffe9,#aaffe9,#afffe9,#b4ffe9,#baffe9,#bfffe9,#c5ffe8,#caffe8,#d0ffe8,#d6ffe8,#dbffe8,#e1ffe8,#e7ffe8,#edffe8,#f3ffe8,#f9ffe7,#ffffe7,#fff9e2,#fff3dc,#ffeed7,#ffe8d2,#ffe3ce,#ffdec9,#ffd9c4,#ffd4c0,#ffd0bc,#ffccb8,#ffc7b4)"></div><div style="height:5px;background:linear-gradient(90deg,#9cffec,#a1ffec,#a7ffec,#acffec,#b1ffeb,#b7ffeb,#bcffeb,#c2ffeb,#c7ffeb,#cdffeb,#d2ffeb,#d8ffeb,#deffeb,#e4ffeb,#eaffeb,#f0ffeb,#f6ffea,#fcffea,#fffce8,#fff6e2,#fff1dd,#ffebd8,#ffe6d3,#ffe1ce,#ffdcc9,#ffd7c5,#ffd2c0,#ffcebc,#ffc9b8,#ffc5b4)"></div><div style="height:5px;background:linear-gradient(90deg,#9effee,#a3ffee,#a9ffee,#aeffee,#b3ffee,#b9ffee,#beffee,#c4ffee,#c9ffee,#cfffee,#d5ffee,#dbffee,#e0ffee,#e6ffee,#ecffed,#f2ffed,#f8ffed,#feffed,#fff9e8,#fff4e2,#ffeedd,#ffe9d8,#ffe3d3,#ffdece,#ffd9ca,#ffd5c5,#ffd0c1,#ffccbd,#ffc7b9,#ffc3b5)"></div><div style="height:5px;background:linear-gradient(90deg,#a0fff1,#a5fff1,#abfff1,#b0fff1,#b5fff1,#bbfff1,#c1fff1,#c6fff1,#ccfff1,#d1fff1,#d7fff1,#ddfff1,#e3fff0,#e9fff0,#effff0,#f5fff0,#fbfff0,#fffdee,#fff7e8,#fff1e3,#ffebdd,#ffe6d8,#ffe1d3,#ffdccf,#ffd7ca,#ffd2c6,#ffcec1,#ffc9bd,#ffc5b9,#ffc1b5)"></div><div style="height:5px;background:linear-gradient(90deg,#a2fff4,#a7fff4,#adfff4,#b2fff4,#b8fff4,#bdfff4,#c3fff4,#c8fff4,#cefff4,#d4fff4,#dafff4,#e0fff3,#e6fff3,#ecfff3,#f2fff3,#f8fff3,#fefff3,#fffaee,#fff4e9,#ffeee3,#ffe9de,#ffe3d9,#ffded4,#ffd9cf,#ffd5ca,#ffd0c6,#ffcbc2,#ffc7bd,#ffc3b9,#ffbfb6)"></div><div style="height:5px;background:linear-gradient(90deg,#a4fff7,#a9fff7,#affff7,#b4fff7,#bafff7,#bffff7,#c5fff7,#cbfff7,#d1fff6,#d6fff6,#dcfff6,#e2fff6,#e8fff6,#eefff6,#f4fff6,#fbfff6,#fffdf4,#fff7ef,#fff1e9,#ffece3,#ffe6de,#ffe1d9,#ffdcd4,#ffd7cf,#ffd2cb,#ffcec6,#ffc9c2,#ffc5be,#ffc1ba,#ffbdb6)"></div><div style="height:5px;background:linear-gradient(90deg,#a6fffa,#acfffa,#b1fffa,#b7fffa,#bcfff9,#c2fff9,#c7fff9,#cdfff9,#d3fff9,#d9fff9,#dffff9,#e5fff9,#ebfff9,#f1fff9,#f7fff9,#fdfff9,#fffaf5,#fff4ef,#ffefe9,#ffe9e4,#ffe4de,#ffded9,#ffd9d4,#ffd5d0,#ffd0cb,#ffcbc7,#ffc7c2,#ffc3be,#ffbfba,#ffbbb6)"></div><div style="height:5px;background:linear-gradient(90deg,#a8fffc,#aefffc,#b3fffc,#b9fffc,#befffc,#c4fffc,#cafffc,#d0fffc,#d6fffc,#dbfffc,#e1fffc,#e7fffc,#eefffc,#f4fffc,#fafffc,#fffefb,#fff8f5,#fff2ef,#ffece9,#ffe6e4,#ffe1df,#ffdcda,#ffd7d5,#ffd2d0,#ffcecc,#ffc9c7,#ffc5c3,#ffc1bf,#ffbdbb,#ffb9b7)"></div><div style="height:5px;background:linear-gradient(90deg,#aaffff,#b0ffff,#b5ffff,#bbffff,#c0ffff,#c6ffff,#ccffff,#d2ffff,#d8ffff,#deffff,#e4ffff,#eaffff,#f0ffff,#f6ffff,#fcfeff,#fffbfb,#fff5f5,#ffefef,#ffe9ea,#ffe4e4,#ffdfdf,#ffdada,#ffd5d5,#ffd0d0,#ffcbcc,#ffc7c7,#ffc3c3,#ffbfbf,#ffbbbb,#ffb7b7)"></div><div style="height:5px;background:linear-gradient(90deg,#aafcff,#b0fcff,#b5fcff,#bbfcff,#c1fcff,#c6fcff,#ccfcff,#d2fcff,#d8fcff,#defcff,#e4fcff,#eafbff,#f0fbff,#f6fbff,#fcfbff,#fff8fc,#fff2f6,#ffecf0,#ffe7ea,#ffe1e5,#ffdcdf,#ffd7da,#ffd2d6,#ffced1,#ffc9cc,#ffc5c8,#ffc1c4,#ffbcbf,#ffb8bb,#ffb5b8)"></div><div style="height:5px;background:linear-gradient(90deg,#aaf9ff,#b0f9ff,#b5f9ff,#bbf9ff,#c1f9ff,#c6f9ff,#ccf9ff,#d2f9ff,#d8f9ff,#def9ff,#e4f8ff,#eaf8ff,#f0f8ff,#f6f8ff,#fcf8ff,#fff5fc,#ffeff6,#ffeaf0,#ffe4ea,#ffdfe5,#ffdae0,#ffd5db,#ffd0d6,#ffcbd1,#ffc7cd,#ffc3c8,#ffbec4,#ffbac0,#ffb6bc,#ffb3b8)"></div><div style="height:5px;background:linear-gradient(90deg,#abf6ff,#b0f6ff,#b6f6ff,#bbf6ff,#c1f6ff,#c6f6ff,#ccf6ff,#d2f6ff,#d8f6ff,#ddf6ff,#e3f6ff,#e9f5ff,#eff5ff,#f6f5ff,#fcf5ff,#fff2fc,#ffedf6,#ffe7f0,#ffe1eb,#ffdce5,#ffd7e0,#ffd2db,#ffced6,#ffc9d2,#ffc5cd,#ffc0c9,#ffbcc4,#ffb8c0,#ffb4bc,#ffb1b8)"></div><div style="height:5px;background:linear-gradient(90deg,#abf3ff,#b0f3ff,#b6f3ff,#bbf3ff,#c1f3ff,#c6f3ff,#ccf3ff,#d2f3ff,#d8f3ff,#ddf3ff,#e3f3ff,#e9f2ff,#eff2ff,#f5f2ff,#fcf2ff,#fff0fc,#ffeaf6,#ffe4f1,#ffdfeb,#ffdae6,#ffd5e0,#ffd0db,#ffcbd7,#ffc7d2,#ffc2cd,#ffbec9,#ffbac5,#ffb6c1,#ffb2bd,#ffafb9)"></div><div style="height:5px;background:linear-gradient(90deg,#abf0ff,#b0f0ff,#b6f0ff,#bbf0ff,#c1f0ff,#c6f0ff,#ccf0ff,#d2f0ff,#d8f0ff,#ddf0ff,#e3f0ff,#e9f0ff,#efefff,#f5efff,#fbefff,#ffedfd,#ffe7f7,#ffe2f1,#ffdceb,#ffd7e6,#ffd2e1,#ffcedc,#ffc9d7,#ffc5d2,#ffc0ce,#ffbcc9,#ffb8c5,#ffb4c1,#ffb0bd,#ffadb9)"></div><div style="height:5px;background:linear-gradient(90deg,#abeeff,#b1eeff,#b6eeff,#bbedff,#c1edff,#c7edff,#ccedff,#d2edff,#d8edff,#ddedff,#e3edff,#e9edff,#efedff,#f5ecff,#fbecff,#ffeafd,#ffe4f7,#ffdff1,#ffdaec,#ffd5e6,#ffd0e1,#ffcbdc,#ffc7d7,#ffc2d3,#ffbece,#ffbaca,#ffb6c5,#ffb2c1,#ffaebd,#ffabba)"></div><div style="height:5px;background:linear-gradient(90deg,#abebff,#b1ebff,#b6ebff,#bcebff,#c1ebff,#c7eaff,#cceaff,#d2eaff,#d8eaff,#ddeaff,#e3eaff,#e9eaff,#efeaff,#f5e9ff,#fbe9ff,#ffe7fd,#ffe2f7,#ffdcf1,#ffd7ec,#ffd2e6,#ffcee1,#ffc9dc,#ffc4d8,#ffc0d3,#ffbcce,#ffb8ca,#ffb4c6,#ffb0c2,#ffacbe,#ffa9ba)"></div><div style="height:5px;background:linear-gradient(90deg,#ace8ff,#b1e8ff,#b6e8ff,#bce8ff,#c1e8ff,#c7e8ff,#cce8ff,#d2e7ff,#d7e7ff,#dde7ff,#e3e7ff,#e9e7ff,#efe7ff,#f5e7ff,#fbe6ff,#ffe5fd,#ffdff7,#ffdaf2,#ffd5ec,#ffd0e7,#ffcbe2,#ffc7dd,#ffc2d8,#ffbed3,#ffbacf,#ffb6ca,#ffb2c6,#ffaec2,#ffaabe,#ffa7ba)"></div><div style="height:5px;background:linear-gradient(90deg,#ace6ff,#b1e5ff,#b6e5ff,#bce5ff,#c1e5ff,#c7e5ff,#cce5ff,#d2e5ff,#d7e4ff,#dde4ff,#e3e4ff,#e9e4ff,#efe4ff,#f5e4ff,#fbe4ff,#ffe2fd,#ffddf8,#ffd7f2,#ffd2ec,#ffcee7,#ffc9e2,#ffc4dd,#ffc0d8,#ffbcd4,#ffb8cf,#ffb4cb,#ffb0c7,#ffacc2,#ffa8bf,#ffa5bb)"></div><div style="height:5px;background:linear-gradient(90deg,#ace3ff,#b1e3ff,#b6e3ff,#bce2ff,#c1e2ff,#c7e2ff,#cce2ff,#d2e2ff,#d7e2ff,#dde2ff,#e3e1ff,#e9e1ff,#eee1ff,#f4e1ff,#fae1ff,#ffdffe,#ffdaf8,#ffd5f2,#ffd0ed,#ffcbe7,#ffc6e2,#ffc2dd,#ffbed9,#ffb9d4,#ffb5cf,#ffb2cb,#ffaec7,#ffaac3,#ffa6bf,#ffa3bb)"></div><div style="height:5px;background:linear-gradient(90deg,#ace0ff,#b1e0ff,#b7e0ff,#bce0ff,#c1e0ff,#c7dfff,#ccdfff,#d2dfff,#d7dfff,#dddfff,#e3dfff,#e9deff,#eedeff,#f4deff,#fadeff,#ffddfe,#ffd7f8,#ffd2f2,#ffcded,#ffc9e8,#ffc4e3,#ffc0de,#ffbbd9,#ffb7d4,#ffb3d0,#ffafcb,#ffacc7,#ffa8c3,#ffa4bf,#ffa1bb)"></div><div style="height:5px;background:linear-gradient(90deg,#acdeff,#b1ddff,#b7ddff,#bcddff,#c1ddff,#c7ddff,#ccddff,#d2dcff,#d7dcff,#dddcff,#e3dcff,#e8dcff,#eedbff,#f4dbff,#fadbff,#ffdafe,#ffd5f8,#ffd0f3,#ffcbed,#ffc6e8,#ffc2e3,#ffbede,#ffb9d9,#ffb5d5,#ffb1d0,#ffadcc,#ffaac8,#ffa6c4,#ffa3c0,#ff9fbc)"></div><div style="height:5px;background:linear-gradient(90deg,#acdbff,#b2dbff,#b7dbff,#bcdaff,#c1daff,#c7daff,#ccdaff,#d2daff,#d7daff,#ddd9ff,#e3d9ff,#e8d9ff,#eed9ff,#f4d9ff,#fad8ff,#ffd8fe,#ffd2f8,#ffcdf3,#ffc9ed,#ffc4e8,#ffc0e3,#ffbbde,#ffb7d9,#ffb3d5,#ffafd0,#ffabcc,#ffa8c8,#ffa4c4,#ffa1c0,#ff9dbc)"></div><div style="height:5px;background:linear-gradient(90deg,#add8ff,#b2d8ff,#b7d8ff,#bcd8ff,#c2d8ff,#c7d7ff,#ccd7ff,#d2d7ff,#d7d7ff,#ddd7ff,#e3d6ff,#e8d6ff,#eed6ff,#f4d6ff,#fad6ff,#ffd5fe,#ffd0f9,#ffcbf3,#ffc6ee,#ffc2e8,#ffbde3,#ffb9df,#ffb5da,#ffb1d5,#ffadd1,#ffa9cd,#ffa6c8,#ffa2c4,#ff9fc0,#ff9bbd)"></div><div style="height:5px;background:linear-gradient(90deg,#add6ff,#b2d6ff,#b7d5ff,#bcd5ff,#c2d5ff,#c7d5ff,#ccd5ff,#d2d4ff,#d7d4ff,#ddd4ff,#e2d4ff,#e8d4ff,#eed3ff,#f4d3ff,#f9d3ff,#ffd2ff,#ffcdf9,#ffc9f3,#ffc4ee,#ffbfe9,#ffbbe4,#ffb7df,#ffb3da,#ffafd6,#ffabd1,#ffa7cd,#ffa4c9,#ffa0c5,#ff9dc1,#ff9abd)"></div><div style="height:5px;background:linear-gradient(90deg,#add3ff,#b2d3ff,#b7d3ff,#bcd3ff,#c2d2ff,#c7d2ff,#ccd2ff,#d2d2ff,#d7d2ff,#ddd1ff,#e2d1ff,#e8d1ff,#eed1ff,#f3d0ff,#f9d0ff,#ffd0ff,#ffcbf9,#ffc6f4,#ffc2ee,#ffbde9,#ffb9e4,#ffb5df,#ffb1da,#ffadd6,#ffa9d1,#ffa5cd,#ffa2c9,#ff9ec5,#ff9bc1,#ff98bd)"></div><div style="height:5px;background:linear-gradient(90deg,#add1ff,#b2d1ff,#b7d0ff,#bdd0ff,#c2d0ff,#c7d0ff,#cccfff,#d2cfff,#d7cfff,#ddcfff,#e2cfff,#e8ceff,#eeceff,#f3ceff,#f9ceff,#ffcdff,#ffc9f9,#ffc4f4,#ffbfee,#ffbbe9,#ffb7e4,#ffb2df,#ffafdb,#ffabd6,#ffa7d2,#ffa3ce,#ffa0c9,#ff9cc5,#ff99c1,#ff96be)"></div><div style="height:5px;background:linear-gradient(90deg,#adceff,#b2ceff,#b7ceff,#bdceff,#c2cdff,#c7cdff,#cccdff,#d2cdff,#d7ccff,#ddccff,#e2ccff,#e8ccff,#edcbff,#f3cbff,#f9cbff,#ffcbff,#ffc6fa,#ffc1f4,#ffbdef,#ffb9ea,#ffb4e5,#ffb0e0,#ffacdb,#ffa9d7,#ffa5d2,#ffa1ce,#ff9eca,#ff9bc6,#ff97c2,#ff94be)"></div></div>
<svg width="760" height="1060"><g fill="none"><rect x="421.2" y="829.2" width="289" height="189" fill="none" stroke="#9a9a9a" stroke-width="1.4"/>
<clipPath id="cclip"><rect x="422" y="830" width="288" height="188"/></clipPath>
<polyline clip-path="url(#cclip)" points="786.3,818.7 768.9,827.6 752.2,836.3 736.3,844.8 721.0,853.0 706.4,861.1 692.3,869.0 678.8,876.6 665.9,884.1 653.5,891.4 641.5,898.4 630.1,905.3 619.0,912.1 608.4,918.6 598.1,925.0 588.3,931.2 578.8,937.2 569.6,943.1 560.8,948.8 552.2,954.4 544.0,959.8 536.0,965.1 528.3,970.3 520.9,975.3 513.7,980.2 506.7,985.0 500.0,989.6 493.5,994.2 487.1,998.6 481.0,1002.9 475.1,1007.1 469.3,1011.2 463.7,1015.2 458.3,1019.1 453.0,1022.9 447.9,1026.7 443.0,1030.3 438.1,1033.8" fill="none" stroke="#000" stroke-width="3.2"/>
<rect x="557.4" y="914.1" width="15.6" height="15.6" fill="#fff" stroke="#000" stroke-width="1.5"/>
<circle cx="452.0" cy="933.8" r="4.7" fill="#0d0d0d" stroke="#000" stroke-width="1.1"/>
<circle cx="559.2" cy="917.7" r="4.7" fill="#1a1a1a" stroke="#000" stroke-width="1.1"/>
<circle cx="567.3" cy="913.5" r="4.7" fill="#262626" stroke="#000" stroke-width="1.1"/>
<circle cx="569.1" cy="916.2" r="4.7" fill="#333333" stroke="#000" stroke-width="1.1"/>
<circle cx="573.7" cy="916.6" r="4.7" fill="#404040" stroke="#000" stroke-width="1.1"/>
<circle cx="556.3" cy="913.9" r="4.7" fill="#4c4c4c" stroke="#000" stroke-width="1.1"/>
<circle cx="557.5" cy="917.7" r="4.7" fill="#595959" stroke="#000" stroke-width="1.1"/>
<circle cx="562.1" cy="918.1" r="4.7" fill="#666666" stroke="#000" stroke-width="1.1"/>
<circle cx="562.1" cy="917.3" r="4.7" fill="#737373" stroke="#000" stroke-width="1.1"/>
<circle cx="572.5" cy="918.9" r="4.7" fill="#808080" stroke="#000" stroke-width="1.1"/>
<circle cx="571.4" cy="919.6" r="4.7" fill="#8c8c8c" stroke="#000" stroke-width="1.1"/>
<circle cx="562.7" cy="921.1" r="4.7" fill="#999999" stroke="#000" stroke-width="1.1"/>
<circle cx="568.5" cy="918.1" r="4.7" fill="#a6a6a6" stroke="#000" stroke-width="1.1"/>
<circle cx="569.6" cy="918.9" r="4.7" fill="#b2b2b2" stroke="#000" stroke-width="1.1"/>
<circle cx="567.9" cy="920.4" r="4.7" fill="#bfbfbf" stroke="#000" stroke-width="1.1"/>
<circle cx="571.4" cy="921.9" r="4.7" fill="#cccccc" stroke="#000" stroke-width="1.1"/>
<circle cx="573.1" cy="919.6" r="4.7" fill="#d9d9d9" stroke="#000" stroke-width="1.1"/>
<circle cx="574.9" cy="920.8" r="4.7" fill="#e6e6e6" stroke="#000" stroke-width="1.1"/>
<circle cx="576.6" cy="922.7" r="4.7" fill="#f2f2f2" stroke="#000" stroke-width="1.1"/>
<circle cx="569.1" cy="921.1" r="4.7" fill="#ffffff" stroke="#000" stroke-width="1.1"/>
<path d="M433.40 1019.60L433.40 1025.20" stroke="#dcdcdc" stroke-width="1.5"/>
<path d="M491.38 1019.60L491.38 1025.20" stroke="#dcdcdc" stroke-width="1.5"/>
<path d="M549.35 1019.60L549.35 1025.20" stroke="#dcdcdc" stroke-width="1.5"/>
<path d="M607.33 1019.60L607.33 1025.20" stroke="#dcdcdc" stroke-width="1.5"/>
<path d="M665.30 1019.60L665.30 1025.20" stroke="#dcdcdc" stroke-width="1.5"/>
<path d="M415.00 960.10L420.40 960.10" stroke="#dcdcdc" stroke-width="1.4"/>
<path d="M415.00 883.60L420.40 883.60" stroke="#dcdcdc" stroke-width="1.4"/>
<text x="433.19" y="1044.20" font-size="17.00" text-anchor="middle" fill="#e4e4e4" letter-spacing="-0.42">0,29</text>
<text x="491.17" y="1044.20" font-size="17.00" text-anchor="middle" fill="#e4e4e4" letter-spacing="-0.42">0,3</text>
<text x="549.14" y="1044.20" font-size="17.00" text-anchor="middle" fill="#e4e4e4" letter-spacing="-0.42">0,31</text>
<text x="607.12" y="1044.20" font-size="17.00" text-anchor="middle" fill="#e4e4e4" letter-spacing="-0.42">0,32</text>
<text x="665.09" y="1044.20" font-size="17.00" text-anchor="middle" fill="#e4e4e4" letter-spacing="-0.42">0,33</text>
<text x="413.08" y="966.00" font-size="17.00" text-anchor="end" fill="#e4e4e4" letter-spacing="-0.42">0,32</text>
<text x="413.08" y="889.50" font-size="17.00" text-anchor="end" fill="#e4e4e4" letter-spacing="-0.42">0,34</text>
<text x="502.03" y="823.20" font-size="17.30" fill="#e4e4e4" letter-spacing="-0.768">CIE 1931 xy</text></g></svg>
<div class="a" style="left:722px;top:794px;width:1190px;height:262px;background:#0c0c0c;overflow:hidden">
<div class="a" style="left:1px;top:1px;width:1188px;height:29px;background:linear-gradient(#2e2e2e,#2c2c2c 52%,#171717 56%,#141414 90%,#0a0a0a 94%)"></div>
<div class="a" style="left:1px;top:30px;width:1188px;height:27px;background:#404040"></div>
<div class="a" style="left:1px;top:57px;width:1188px;height:27px;background:#808080"></div>
<div class="a" style="left:1px;top:84px;width:1188px;height:27px;background:#404040"></div>
<div class="a" style="left:1px;top:111px;width:1188px;height:26px;background:#808080"></div>
<div class="a" style="left:1px;top:137px;width:1188px;height:27px;background:#404040"></div>
<div class="a" style="left:1px;top:164px;width:1188px;height:27px;background:#808080"></div>
<div class="a" style="left:1px;top:191px;width:1188px;height:27px;background:#404040"></div>
<div class="a" style="left:1px;top:218px;width:1188px;height:27px;background:#808080"></div>
</div>
<div class="t" style="top:802.90px;font-size:14.80px;color:#f4f4f4;letter-spacing:-0.300px;left:901.00px;transform:translateX(-50%);">0</div>
<div class="t" style="top:802.90px;font-size:14.80px;color:#f4f4f4;letter-spacing:-0.300px;left:976.60px;transform:translateX(-50%);">5</div>
<div class="t" style="top:802.90px;font-size:14.80px;color:#f4f4f4;letter-spacing:-0.300px;left:1052.20px;transform:translateX(-50%);">10</div>
<div class="t" style="top:802.90px;font-size:14.80px;color:#f4f4f4;letter-spacing:-0.300px;left:1127.80px;transform:translateX(-50%);">15</div>
<div class="t" style="top:802.90px;font-size:14.80px;color:#f4f4f4;letter-spacing:-0.300px;left:1203.40px;transform:translateX(-50%);">20</div>
<div class="t" style="top:802.90px;font-size:14.80px;color:#f4f4f4;letter-spacing:-0.300px;left:1279.00px;transform:translateX(-50%);">25</div>
<div class="t" style="top:802.90px;font-size:14.80px;color:#f4f4f4;letter-spacing:-0.300px;left:1354.60px;transform:translateX(-50%);">30</div>
<div class="t" style="top:802.90px;font-size:14.80px;color:#f4f4f4;letter-spacing:-0.300px;left:1430.20px;transform:translateX(-50%);">35</div>
<div class="t" style="top:802.90px;font-size:14.80px;color:#f4f4f4;letter-spacing:-0.300px;left:1505.80px;transform:translateX(-50%);">40</div>
<div class="t" style="top:802.90px;font-size:14.80px;color:#f4f4f4;letter-spacing:-0.300px;left:1581.40px;transform:translateX(-50%);">45</div>
<div class="t" style="top:802.90px;font-size:14.80px;color:#f4f4f4;letter-spacing:-0.300px;left:1657.00px;transform:translateX(-50%);">50</div>
<div class="t" style="top:802.90px;font-size:14.80px;color:#f4f4f4;letter-spacing:-0.300px;left:1732.60px;transform:translateX(-50%);">55</div>
<div class="t" style="top:802.90px;font-size:14.80px;color:#f4f4f4;letter-spacing:-0.300px;left:1808.20px;transform:translateX(-50%);">60</div>
<div class="t" style="top:802.90px;font-size:14.80px;color:#f4f4f4;letter-spacing:-0.300px;left:1883.80px;transform:translateX(-50%);">65</div>
<div class="t" style="top:831.10px;font-size:14.80px;color:#f4f4f4;font-weight:bold;letter-spacing:-0.392px;left:734.43px;">x: CIE31</div>
<div class="t" style="top:831.10px;font-size:14.80px;color:#f4f4f4;letter-spacing:-0.300px;left:866.60px;max-width:1043.9px;overflow:hidden;">0,1323</div>
<div class="t" style="top:831.10px;font-size:14.80px;color:#f4f4f4;letter-spacing:-0.300px;left:942.20px;max-width:968.3px;overflow:hidden;">0,2932</div>
<div class="t" style="top:831.10px;font-size:14.80px;color:#f4f4f4;letter-spacing:-0.300px;left:1017.80px;max-width:892.7px;overflow:hidden;">0,3117</div>
<div class="t" style="top:831.10px;font-size:14.80px;color:#f4f4f4;letter-spacing:-0.300px;left:1093.40px;max-width:817.1px;overflow:hidden;">0,3131</div>
<div class="t" style="top:831.10px;font-size:14.80px;color:#f4f4f4;letter-spacing:-0.300px;left:1169.00px;max-width:741.5px;overflow:hidden;">0,3134</div>
<div class="t" style="top:831.10px;font-size:14.80px;color:#f4f4f4;letter-spacing:-0.300px;left:1244.60px;max-width:665.9px;overflow:hidden;">0,3142</div>
<div class="t" style="top:831.10px;font-size:14.80px;color:#f4f4f4;letter-spacing:-0.300px;left:1320.20px;max-width:590.3px;overflow:hidden;">0,3112</div>
<div class="t" style="top:831.10px;font-size:14.80px;color:#f4f4f4;letter-spacing:-0.300px;left:1395.80px;max-width:514.7px;overflow:hidden;">0,3114</div>
<div class="t" style="top:831.10px;font-size:14.80px;color:#f4f4f4;letter-spacing:-0.300px;left:1471.40px;max-width:439.1px;overflow:hidden;">0,3122</div>
<div class="t" style="top:831.10px;font-size:14.80px;color:#f4f4f4;letter-spacing:-0.300px;left:1547.00px;max-width:363.5px;overflow:hidden;">0,3122</div>
<div class="t" style="top:831.10px;font-size:14.80px;color:#f4f4f4;letter-spacing:-0.300px;left:1622.60px;max-width:287.9px;overflow:hidden;">0,3140</div>
<div class="t" style="top:831.10px;font-size:14.80px;color:#f4f4f4;letter-spacing:-0.300px;left:1698.20px;max-width:212.3px;overflow:hidden;">0,3138</div>
<div class="t" style="top:831.10px;font-size:14.80px;color:#f4f4f4;letter-spacing:-0.300px;left:1773.80px;max-width:136.7px;overflow:hidden;">0,3123</div>
<div class="t" style="top:831.10px;font-size:14.80px;color:#f4f4f4;letter-spacing:-0.300px;left:1849.40px;max-width:61.1px;overflow:hidden;">0,3133</div>
<div class="t" style="top:858.10px;font-size:14.80px;color:#f4f4f4;font-weight:bold;letter-spacing:-0.387px;left:734.39px;">y: CIE31</div>
<div class="t" style="top:858.10px;font-size:14.80px;color:#f4f4f4;letter-spacing:-0.300px;left:866.60px;max-width:1043.9px;overflow:hidden;">0,0000</div>
<div class="t" style="top:858.10px;font-size:14.80px;color:#f4f4f4;letter-spacing:-0.300px;left:942.20px;max-width:968.3px;overflow:hidden;">0,3261</div>
<div class="t" style="top:858.10px;font-size:14.80px;color:#f4f4f4;letter-spacing:-0.300px;left:1017.80px;max-width:892.7px;overflow:hidden;">0,3303</div>
<div class="t" style="top:858.10px;font-size:14.80px;color:#f4f4f4;letter-spacing:-0.300px;left:1093.40px;max-width:817.1px;overflow:hidden;">0,3314</div>
<div class="t" style="top:858.10px;font-size:14.80px;color:#f4f4f4;letter-spacing:-0.300px;left:1169.00px;max-width:741.5px;overflow:hidden;">0,3307</div>
<div class="t" style="top:858.10px;font-size:14.80px;color:#f4f4f4;letter-spacing:-0.300px;left:1244.60px;max-width:665.9px;overflow:hidden;">0,3306</div>
<div class="t" style="top:858.10px;font-size:14.80px;color:#f4f4f4;letter-spacing:-0.300px;left:1320.20px;max-width:590.3px;overflow:hidden;">0,3313</div>
<div class="t" style="top:858.10px;font-size:14.80px;color:#f4f4f4;letter-spacing:-0.300px;left:1395.80px;max-width:514.7px;overflow:hidden;">0,3303</div>
<div class="t" style="top:858.10px;font-size:14.80px;color:#f4f4f4;letter-spacing:-0.300px;left:1471.40px;max-width:439.1px;overflow:hidden;">0,3302</div>
<div class="t" style="top:858.10px;font-size:14.80px;color:#f4f4f4;letter-spacing:-0.300px;left:1547.00px;max-width:363.5px;overflow:hidden;">0,3304</div>
<div class="t" style="top:858.10px;font-size:14.80px;color:#f4f4f4;letter-spacing:-0.300px;left:1622.60px;max-width:287.9px;overflow:hidden;">0,3300</div>
<div class="t" style="top:858.10px;font-size:14.80px;color:#f4f4f4;letter-spacing:-0.300px;left:1698.20px;max-width:212.3px;overflow:hidden;">0,3298</div>
<div class="t" style="top:858.10px;font-size:14.80px;color:#f4f4f4;letter-spacing:-0.300px;left:1773.80px;max-width:136.7px;overflow:hidden;">0,3294</div>
<div class="t" style="top:858.10px;font-size:14.80px;color:#f4f4f4;letter-spacing:-0.300px;left:1849.40px;max-width:61.1px;overflow:hidden;">0,3302</div>
<div class="t" style="top:884.90px;font-size:14.80px;color:#f4f4f4;font-weight:bold;letter-spacing:0.000px;left:734.28px;">Y</div>
<div class="t" style="top:884.90px;font-size:14.80px;color:#f4f4f4;letter-spacing:-0.300px;left:866.60px;max-width:1043.9px;overflow:hidden;">0,0000</div>
<div class="t" style="top:884.90px;font-size:14.80px;color:#f4f4f4;letter-spacing:-0.300px;left:942.20px;max-width:968.3px;overflow:hidden;">0,5454</div>
<div class="t" style="top:884.90px;font-size:14.80px;color:#f4f4f4;letter-spacing:-0.300px;left:1017.80px;max-width:892.7px;overflow:hidden;">3,2728</div>
<div class="t" style="top:884.90px;font-size:14.80px;color:#f4f4f4;letter-spacing:-0.300px;left:1093.40px;max-width:817.1px;overflow:hidden;">6,9832</div>
<div class="t" style="top:884.90px;font-size:14.80px;color:#f4f4f4;letter-spacing:-0.300px;left:1169.00px;max-width:741.5px;overflow:hidden;">12,0999</div>
<div class="t" style="top:884.90px;font-size:14.80px;color:#f4f4f4;letter-spacing:-0.300px;left:1244.60px;max-width:665.9px;overflow:hidden;">18,7083</div>
<div class="t" style="top:884.90px;font-size:14.80px;color:#f4f4f4;letter-spacing:-0.300px;left:1320.20px;max-width:590.3px;overflow:hidden;">26,4563</div>
<div class="t" style="top:884.90px;font-size:14.80px;color:#f4f4f4;letter-spacing:-0.300px;left:1395.80px;max-width:514.7px;overflow:hidden;">35,9832</div>
<div class="t" style="top:884.90px;font-size:14.80px;color:#f4f4f4;letter-spacing:-0.300px;left:1471.40px;max-width:439.1px;overflow:hidden;">48,5200</div>
<div class="t" style="top:884.90px;font-size:14.80px;color:#f4f4f4;letter-spacing:-0.300px;left:1547.00px;max-width:363.5px;overflow:hidden;">63,0121</div>
<div class="t" style="top:884.90px;font-size:14.80px;color:#f4f4f4;letter-spacing:-0.300px;left:1622.60px;max-width:287.9px;overflow:hidden;">79,3136</div>
<div class="t" style="top:884.90px;font-size:14.80px;color:#f4f4f4;letter-spacing:-0.300px;left:1698.20px;max-width:212.3px;overflow:hidden;">96,3219</div>
<div class="t" style="top:884.90px;font-size:14.80px;color:#f4f4f4;letter-spacing:-0.300px;left:1773.80px;max-width:136.7px;overflow:hidden;">116,7408</div>
<div class="t" style="top:884.90px;font-size:14.80px;color:#f4f4f4;letter-spacing:-0.300px;left:1849.40px;max-width:61.1px;overflow:hidden;">140,2024</div>
<div class="t" style="top:911.60px;font-size:14.80px;color:#f4f4f4;font-weight:bold;letter-spacing:0.031px;left:734.35px;">Target Y</div>
<div class="t" style="top:911.60px;font-size:14.80px;color:#f4f4f4;letter-spacing:-0.300px;left:866.60px;max-width:1043.9px;overflow:hidden;">0,0000</div>
<div class="t" style="top:911.60px;font-size:14.80px;color:#f4f4f4;letter-spacing:-0.300px;left:942.20px;max-width:968.3px;overflow:hidden;">0,2899</div>
<div class="t" style="top:911.60px;font-size:14.80px;color:#f4f4f4;letter-spacing:-0.300px;left:1017.80px;max-width:892.7px;overflow:hidden;">1,5301</div>
<div class="t" style="top:911.60px;font-size:14.80px;color:#f4f4f4;letter-spacing:-0.300px;left:1093.40px;max-width:817.1px;overflow:hidden;">3,8041</div>
<div class="t" style="top:911.60px;font-size:14.80px;color:#f4f4f4;letter-spacing:-0.300px;left:1169.00px;max-width:741.5px;overflow:hidden;">7,7080</div>
<div class="t" style="top:911.60px;font-size:14.80px;color:#f4f4f4;letter-spacing:-0.300px;left:1244.60px;max-width:665.9px;overflow:hidden;">13,2923</div>
<div class="t" style="top:911.60px;font-size:14.80px;color:#f4f4f4;letter-spacing:-0.300px;left:1320.20px;max-width:590.3px;overflow:hidden;">20,0780</div>
<div class="t" style="top:911.60px;font-size:14.80px;color:#f4f4f4;letter-spacing:-0.300px;left:1395.80px;max-width:514.7px;overflow:hidden;">29,3294</div>
<div class="t" style="top:911.60px;font-size:14.80px;color:#f4f4f4;letter-spacing:-0.300px;left:1471.40px;max-width:439.1px;overflow:hidden;">40,6824</div>
<div class="t" style="top:911.60px;font-size:14.80px;color:#f4f4f4;letter-spacing:-0.300px;left:1547.00px;max-width:363.5px;overflow:hidden;">54,2550</div>
<div class="t" style="top:911.60px;font-size:14.80px;color:#f4f4f4;letter-spacing:-0.300px;left:1622.60px;max-width:287.9px;overflow:hidden;">70,1566</div>
<div class="t" style="top:911.60px;font-size:14.80px;color:#f4f4f4;letter-spacing:-0.300px;left:1698.20px;max-width:212.3px;overflow:hidden;">86,9905</div>
<div class="t" style="top:911.60px;font-size:14.80px;color:#f4f4f4;letter-spacing:-0.300px;left:1773.80px;max-width:136.7px;overflow:hidden;">107,6523</div>
<div class="t" style="top:911.60px;font-size:14.80px;color:#f4f4f4;letter-spacing:-0.300px;left:1849.40px;max-width:61.1px;overflow:hidden;">130,9252</div>
<div class="t" style="top:938.40px;font-size:14.80px;color:#f4f4f4;font-weight:bold;letter-spacing:0.143px;left:733.91px;">Gamma Log/Log</div>
<div class="t" style="top:938.40px;font-size:14.80px;color:#f4f4f4;letter-spacing:-0.300px;left:866.60px;max-width:1043.9px;overflow:hidden;">2,3943</div>
<div class="t" style="top:938.40px;font-size:14.80px;color:#f4f4f4;letter-spacing:-0.300px;left:942.20px;max-width:968.3px;overflow:hidden;">2,1876</div>
<div class="t" style="top:938.40px;font-size:14.80px;color:#f4f4f4;letter-spacing:-0.300px;left:1017.80px;max-width:892.7px;overflow:hidden;">2,0670</div>
<div class="t" style="top:938.40px;font-size:14.80px;color:#f4f4f4;letter-spacing:-0.300px;left:1093.40px;max-width:817.1px;overflow:hidden;">2,0809</div>
<div class="t" style="top:938.40px;font-size:14.80px;color:#f4f4f4;letter-spacing:-0.300px;left:1169.00px;max-width:741.5px;overflow:hidden;">2,1198</div>
<div class="t" style="top:938.40px;font-size:14.80px;color:#f4f4f4;letter-spacing:-0.300px;left:1244.60px;max-width:665.9px;overflow:hidden;">2,1527</div>
<div class="t" style="top:938.40px;font-size:14.80px;color:#f4f4f4;letter-spacing:-0.300px;left:1320.20px;max-width:590.3px;overflow:hidden;">2,1721</div>
<div class="t" style="top:938.40px;font-size:14.80px;color:#f4f4f4;letter-spacing:-0.300px;left:1395.80px;max-width:514.7px;overflow:hidden;">2,2058</div>
<div class="t" style="top:938.40px;font-size:14.80px;color:#f4f4f4;letter-spacing:-0.300px;left:1471.40px;max-width:439.1px;overflow:hidden;">2,2077</div>
<div class="t" style="top:938.40px;font-size:14.80px;color:#f4f4f4;letter-spacing:-0.300px;left:1547.00px;max-width:363.5px;overflow:hidden;">2,2121</div>
<div class="t" style="top:938.40px;font-size:14.80px;color:#f4f4f4;letter-spacing:-0.300px;left:1622.60px;max-width:287.9px;overflow:hidden;">2,2220</div>
<div class="t" style="top:938.40px;font-size:14.80px;color:#f4f4f4;letter-spacing:-0.300px;left:1698.20px;max-width:212.3px;overflow:hidden;">2,2301</div>
<div class="t" style="top:938.40px;font-size:14.80px;color:#f4f4f4;letter-spacing:-0.300px;left:1773.80px;max-width:136.7px;overflow:hidden;">2,2413</div>
<div class="t" style="top:938.40px;font-size:14.80px;color:#f4f4f4;letter-spacing:-0.300px;left:1849.40px;max-width:61.1px;overflow:hidden;">2,2405</div>
<div class="t" style="top:965.20px;font-size:14.80px;color:#f4f4f4;font-weight:bold;letter-spacing:-1.453px;left:733.91px;">CCT</div>
<div class="t" style="top:965.20px;font-size:14.80px;color:#f4f4f4;letter-spacing:-0.300px;left:866.60px;max-width:1043.9px;overflow:hidden;">1792,0000</div>
<div class="t" style="top:965.20px;font-size:14.80px;color:#f4f4f4;letter-spacing:-0.300px;left:942.20px;max-width:968.3px;overflow:hidden;">7688,0000</div>
<div class="t" style="top:965.20px;font-size:14.80px;color:#f4f4f4;letter-spacing:-0.300px;left:1017.80px;max-width:892.7px;overflow:hidden;">6551,0000</div>
<div class="t" style="top:965.20px;font-size:14.80px;color:#f4f4f4;letter-spacing:-0.300px;left:1093.40px;max-width:817.1px;overflow:hidden;">6465,0000</div>
<div class="t" style="top:965.20px;font-size:14.80px;color:#f4f4f4;letter-spacing:-0.300px;left:1169.00px;max-width:741.5px;overflow:hidden;">6453,0000</div>
<div class="t" style="top:965.20px;font-size:14.80px;color:#f4f4f4;letter-spacing:-0.300px;left:1244.60px;max-width:665.9px;overflow:hidden;">6414,0000</div>
<div class="t" style="top:965.20px;font-size:14.80px;color:#f4f4f4;letter-spacing:-0.300px;left:1320.20px;max-width:590.3px;overflow:hidden;">6568,0000</div>
<div class="t" style="top:965.20px;font-size:14.80px;color:#f4f4f4;letter-spacing:-0.300px;left:1395.80px;max-width:514.7px;overflow:hidden;">6566,0000</div>
<div class="t" style="top:965.20px;font-size:14.80px;color:#f4f4f4;letter-spacing:-0.300px;left:1471.40px;max-width:439.1px;overflow:hidden;">6525,0000</div>
<div class="t" style="top:965.20px;font-size:14.80px;color:#f4f4f4;letter-spacing:-0.300px;left:1547.00px;max-width:363.5px;overflow:hidden;">6519,0000</div>
<div class="t" style="top:965.20px;font-size:14.80px;color:#f4f4f4;letter-spacing:-0.300px;left:1622.60px;max-width:287.9px;overflow:hidden;">6428,0000</div>
<div class="t" style="top:965.20px;font-size:14.80px;color:#f4f4f4;letter-spacing:-0.300px;left:1698.20px;max-width:212.3px;overflow:hidden;">6441,0000</div>
<div class="t" style="top:965.20px;font-size:14.80px;color:#f4f4f4;letter-spacing:-0.300px;left:1773.80px;max-width:136.7px;overflow:hidden;">6521,0000</div>
<div class="t" style="top:965.20px;font-size:14.80px;color:#f4f4f4;letter-spacing:-0.300px;left:1849.40px;max-width:61.1px;overflow:hidden;">6461,0000</div>
<div class="t" style="top:991.90px;font-size:14.80px;color:#f4f4f4;font-weight:bold;letter-spacing:0.120px;left:733.91px;">ΔE 2000</div>
<div class="t" style="top:991.90px;font-size:14.80px;color:#f4f4f4;letter-spacing:-0.300px;left:866.60px;max-width:1043.9px;overflow:hidden;">0,1076</div>
<div class="t" style="top:991.90px;font-size:14.80px;color:#f4f4f4;letter-spacing:-0.300px;left:942.20px;max-width:968.3px;overflow:hidden;">0,6120</div>
<div class="t" style="top:991.90px;font-size:14.80px;color:#f4f4f4;letter-spacing:-0.300px;left:1017.80px;max-width:892.7px;overflow:hidden;">2,6158</div>
<div class="t" style="top:991.90px;font-size:14.80px;color:#f4f4f4;letter-spacing:-0.300px;left:1093.40px;max-width:817.1px;overflow:hidden;">3,6607</div>
<div class="t" style="top:991.90px;font-size:14.80px;color:#f4f4f4;letter-spacing:-0.300px;left:1169.00px;max-width:741.5px;overflow:hidden;">3,5568</div>
<div class="t" style="top:991.90px;font-size:14.80px;color:#f4f4f4;letter-spacing:-0.300px;left:1244.60px;max-width:665.9px;overflow:hidden;">3,3876</div>
<div class="t" style="top:991.90px;font-size:14.80px;color:#f4f4f4;letter-spacing:-0.300px;left:1320.20px;max-width:590.3px;overflow:hidden;">3,4986</div>
<div class="t" style="top:991.90px;font-size:14.80px;color:#f4f4f4;letter-spacing:-0.300px;left:1395.80px;max-width:514.7px;overflow:hidden;">3,0658</div>
<div class="t" style="top:991.90px;font-size:14.80px;color:#f4f4f4;letter-spacing:-0.300px;left:1471.40px;max-width:439.1px;overflow:hidden;">3,1030</div>
<div class="t" style="top:991.90px;font-size:14.80px;color:#f4f4f4;letter-spacing:-0.300px;left:1547.00px;max-width:363.5px;overflow:hidden;">3,1617</div>
<div class="t" style="top:991.90px;font-size:14.80px;color:#f4f4f4;letter-spacing:-0.300px;left:1622.60px;max-width:287.9px;overflow:hidden;">2,7773</div>
<div class="t" style="top:991.90px;font-size:14.80px;color:#f4f4f4;letter-spacing:-0.300px;left:1698.20px;max-width:212.3px;overflow:hidden;">2,3053</div>
<div class="t" style="top:991.90px;font-size:14.80px;color:#f4f4f4;letter-spacing:-0.300px;left:1773.80px;max-width:136.7px;overflow:hidden;">1,8487</div>
<div class="t" style="top:991.90px;font-size:14.80px;color:#f4f4f4;letter-spacing:-0.300px;left:1849.40px;max-width:61.1px;overflow:hidden;">1,5992</div>
<div class="t" style="top:1018.70px;font-size:14.80px;color:#f4f4f4;font-weight:bold;letter-spacing:-0.175px;left:733.91px;">ΔE ITP</div>
<div class="t" style="top:1018.70px;font-size:14.80px;color:#f4f4f4;letter-spacing:-0.300px;left:866.60px;max-width:1043.9px;overflow:hidden;">16,9433</div>
<div class="t" style="top:1018.70px;font-size:14.80px;color:#f4f4f4;letter-spacing:-0.300px;left:942.20px;max-width:968.3px;overflow:hidden;">19,0009</div>
<div class="t" style="top:1018.70px;font-size:14.80px;color:#f4f4f4;letter-spacing:-0.300px;left:1017.80px;max-width:892.7px;overflow:hidden;">33,2805</div>
<div class="t" style="top:1018.70px;font-size:14.80px;color:#f4f4f4;letter-spacing:-0.300px;left:1093.40px;max-width:817.1px;overflow:hidden;">31,0358</div>
<div class="t" style="top:1018.70px;font-size:14.80px;color:#f4f4f4;letter-spacing:-0.300px;left:1169.00px;max-width:741.5px;overflow:hidden;">25,4448</div>
<div class="t" style="top:1018.70px;font-size:14.80px;color:#f4f4f4;letter-spacing:-0.300px;left:1244.60px;max-width:665.9px;overflow:hidden;">20,6374</div>
<div class="t" style="top:1018.70px;font-size:14.80px;color:#f4f4f4;letter-spacing:-0.300px;left:1320.20px;max-width:590.3px;overflow:hidden;">17,4448</div>
<div class="t" style="top:1018.70px;font-size:14.80px;color:#f4f4f4;letter-spacing:-0.300px;left:1395.80px;max-width:514.7px;overflow:hidden;">13,4272</div>
<div class="t" style="top:1018.70px;font-size:14.80px;color:#f4f4f4;letter-spacing:-0.300px;left:1471.40px;max-width:439.1px;overflow:hidden;">11,9154</div>
<div class="t" style="top:1018.70px;font-size:14.80px;color:#f4f4f4;letter-spacing:-0.300px;left:1547.00px;max-width:363.5px;overflow:hidden;">10,3698</div>
<div class="t" style="top:1018.70px;font-size:14.80px;color:#f4f4f4;letter-spacing:-0.300px;left:1622.60px;max-width:287.9px;overflow:hidden;">8,6984</div>
<div class="t" style="top:1018.70px;font-size:14.80px;color:#f4f4f4;letter-spacing:-0.300px;left:1698.20px;max-width:212.3px;overflow:hidden;">7,3368</div>
<div class="t" style="top:1018.70px;font-size:14.80px;color:#f4f4f4;letter-spacing:-0.300px;left:1773.80px;max-width:136.7px;overflow:hidden;">5,8969</div>
<div class="t" style="top:1018.70px;font-size:14.80px;color:#f4f4f4;letter-spacing:-0.300px;left:1849.40px;max-width:61.1px;overflow:hidden;">5,0429</div>
<div class="a" style="left:723px;top:1038px;width:1188px;height:17px;background:#626262"></div>
<div class="a" style="left:740px;top:1040px;width:792px;height:14px;border-radius:5px;background:#444"></div>
<div class="a" style="left:724.5px;top:1040px;width:13px;height:14px;border-radius:3px;background:#858585"></div>
<div class="a" style="left:1897px;top:1040px;width:13px;height:14px;border-radius:3px;background:#858585"></div>
<svg width="1920" height="1060"><path d="M733.6 1042.3v9.400l-5.600-4.700zM1901 1042.3v9.400l5.600-4.700z" fill="#444"/></svg>
<div class="bb" style="left:2.4px"><b style="background:#000000"></b><span>0</span></div>
<div class="bb" style="left:79.3px"><b style="background:#0d0d0d"></b><span>5</span></div>
<div class="bb" style="left:156.1px"><b style="background:#1a1a1a"></b><span>10</span></div>
<div class="bb" style="left:233.0px"><b style="background:#262626"></b><span>15</span></div>
<div class="bb" style="left:309.9px"><b style="background:#333333"></b><span>20</span></div>
<div class="bb" style="left:386.8px"><b style="background:#404040"></b><span>25</span></div>
<div class="bb" style="left:463.6px"><b style="background:#4c4c4c"></b><span>30</span></div>
<div class="bb" style="left:540.5px"><b style="background:#595959"></b><span>35</span></div>
<div class="bb" style="left:617.4px"><b style="background:#666666"></b><span>40</span></div>
<div class="bb" style="left:694.2px"><b style="background:#737373"></b><span>45</span></div>
<div class="bb" style="left:771.1px"><b style="background:#808080"></b><span>50</span></div>
<div class="bb" style="left:848.0px"><b style="background:#8c8c8c"></b><span>55</span></div>
<div class="bb" style="left:924.8px"><b style="background:#999999"></b><span>60</span></div>
<div class="bb" style="left:1001.7px"><b style="background:#a6a6a6"></b><span>65</span></div>
<div class="bb" style="left:1078.6px"><b style="background:#b2b2b2"></b><span>70</span></div>
<div class="bb" style="left:1155.5px"><b style="background:#bfbfbf"></b><span>75</span></div>
<div class="bb" style="left:1232.3px"><b style="background:#cccccc"></b><span>80</span></div>
<div class="bb" style="left:1309.2px"><b style="background:#d9d9d9"></b><span>85</span></div>
<div class="bb" style="left:1386.1px"><b style="background:#e6e6e6"></b><span>90</span></div>
<div class="bb" style="left:1462.9px"><b style="background:#f2f2f2"></b><span>95</span></div>
<div class="bb" style="left:1539.8px;background:linear-gradient(#202020,#2c2c2c)"><b style="background:#fff;box-shadow:none"></b><span style="color:#fff">100</span></div>
<div class="a" style="left:1618px;top:1097px;width:44.600px;height:17px;border-radius:4px 4px 0 0;background:linear-gradient(#9a9a9a,#7c7c7c)"></div>
<div class="a" style="left:1618px;top:1115px;width:44.600px;height:39px;background:linear-gradient(#8e8e8e,#5e5e5e)"></div>
<div class="a" style="left:1633.400px;top:1098.500px;width:14px;height:14px;border-radius:50%;background:linear-gradient(#6e6e6e,#9c9c9c)"></div>
<div class="a" style="left:1626px;top:1120px;width:24.500px;height:24.500px;border-radius:4px;border:2px solid #262626;background:linear-gradient(#a4a4a4,#7c7c7c)"></div>
<div class="a" style="left:1634px;top:1128.400px;width:13px;height:12.400px;background:linear-gradient(#181818,#000 55%)"></div>
<div class="cb" style="left:1664.0px"><u></u></div>
<div class="cb" style="left:1706.4px"><u></u></div>
<div class="cb" style="left:1748.8px"><u></u></div>
<div class="cb" style="left:1791.2px"><u></u></div>
<div class="cb" style="left:1833.6px"><u></u></div>
<div class="a" style="left:1876px;top:1097px;width:44px;height:28px;background:linear-gradient(90deg,#2a2a2a,#343434 60%,#2c2c2c)"></div>
<div class="a" style="left:1888.400px;top:1102px;width:19px;height:19px;border-radius:50%;background:linear-gradient(#333,#3e3e3e)"></div>
<div class="a" style="left:1664px;top:1126px;width:127px;height:28px;border-radius:3px 0 0 0;background:linear-gradient(#a2a2a2,#6a6a6a);box-shadow:1px 0 0 #444"></div>
<div class="a" style="left:1792px;top:1126px;width:126px;height:28px;border-radius:0 3px 0 0;background:linear-gradient(#a2a2a2,#6a6a6a)"></div>
<div class="a" style="left:1683.500px;top:1131.400px;width:18px;height:18px;border-radius:50%;background:linear-gradient(#777,#a2a2a2)"></div>
<div class="a" style="left:1883.700px;top:1131.400px;width:18px;height:18px;border-radius:50%;background:linear-gradient(#777,#a2a2a2)"></div>
<div class="t" style="top:1131.30px;font-size:20.20px;color:#303030;font-weight:bold;letter-spacing:0.207px;left:1716.49px;text-shadow:0 1px 0 rgba(255,255,255,.22);">Back</div>
<div class="t" style="top:1131.30px;font-size:20.20px;color:#303030;font-weight:bold;letter-spacing:2.020px;left:1816.59px;text-shadow:0 1px 0 rgba(255,255,255,.22);">Next</div>
<svg width="1920" height="1156"><g fill="#2c2c2c" stroke="none">
<path d="M1636.200 1107.500h8.400l-4.200-4.600z"/>
<rect x="1681.400" y="1107.200" width="8.400" height="8.400" rx=".8"/>
<path d="M1724.300 1105.600v11.600l9.200-5.800z"/>
</g><g fill="none" stroke="#2c2c2c" stroke-width="1.700">
<path d="M1766.500 1106.400h-2.300v10h2.300M1774.500 1106.400h2.300v10h-2.300"/><path d="M1767.600 1111.400h5.800" stroke-width="1.300" stroke-dasharray="1.400 .8"/>
<path d="M1812.900 1111.400c-1.600-2.900-6.300-2.900-6.300 0s4.700 2.900 6.300 0s6.300-2.900 6.300 0s-4.700 2.900-6.300 0z"/>
<path d="M1850 1110.200a5.400 5.400 0 0 1 9.800-2.400M1860.800 1112.600a5.400 5.400 0 0 1-9.800 2.400" stroke-width="2"/>
</g><g fill="#2c2c2c"><path d="M1861.600 1104.400v5h-5zM1849.200 1118.400v-5h5z"/></g>
<g fill="none" stroke="#2c2c2c" stroke-width="1.700">
<path d="M1694.800 1136l-3.400 4.400 3.400 4.400M1690.600 1136l-3.400 4.400 3.400 4.400"/>
<path d="M1890.400 1136l3.400 4.400-3.400 4.400M1894.600 1136l3.400 4.400-3.400 4.400"/>
</g></svg>
<div class="a" style="left:1916px;top:84px;width:4px;height:1013px;background:linear-gradient(90deg,rgba(0,0,0,0),rgba(0,0,0,.55))"></div>
<div class="a" style="left:0;top:1155px;width:1920px;height:1px;background:#b8bca0"></div>
</body></html>
